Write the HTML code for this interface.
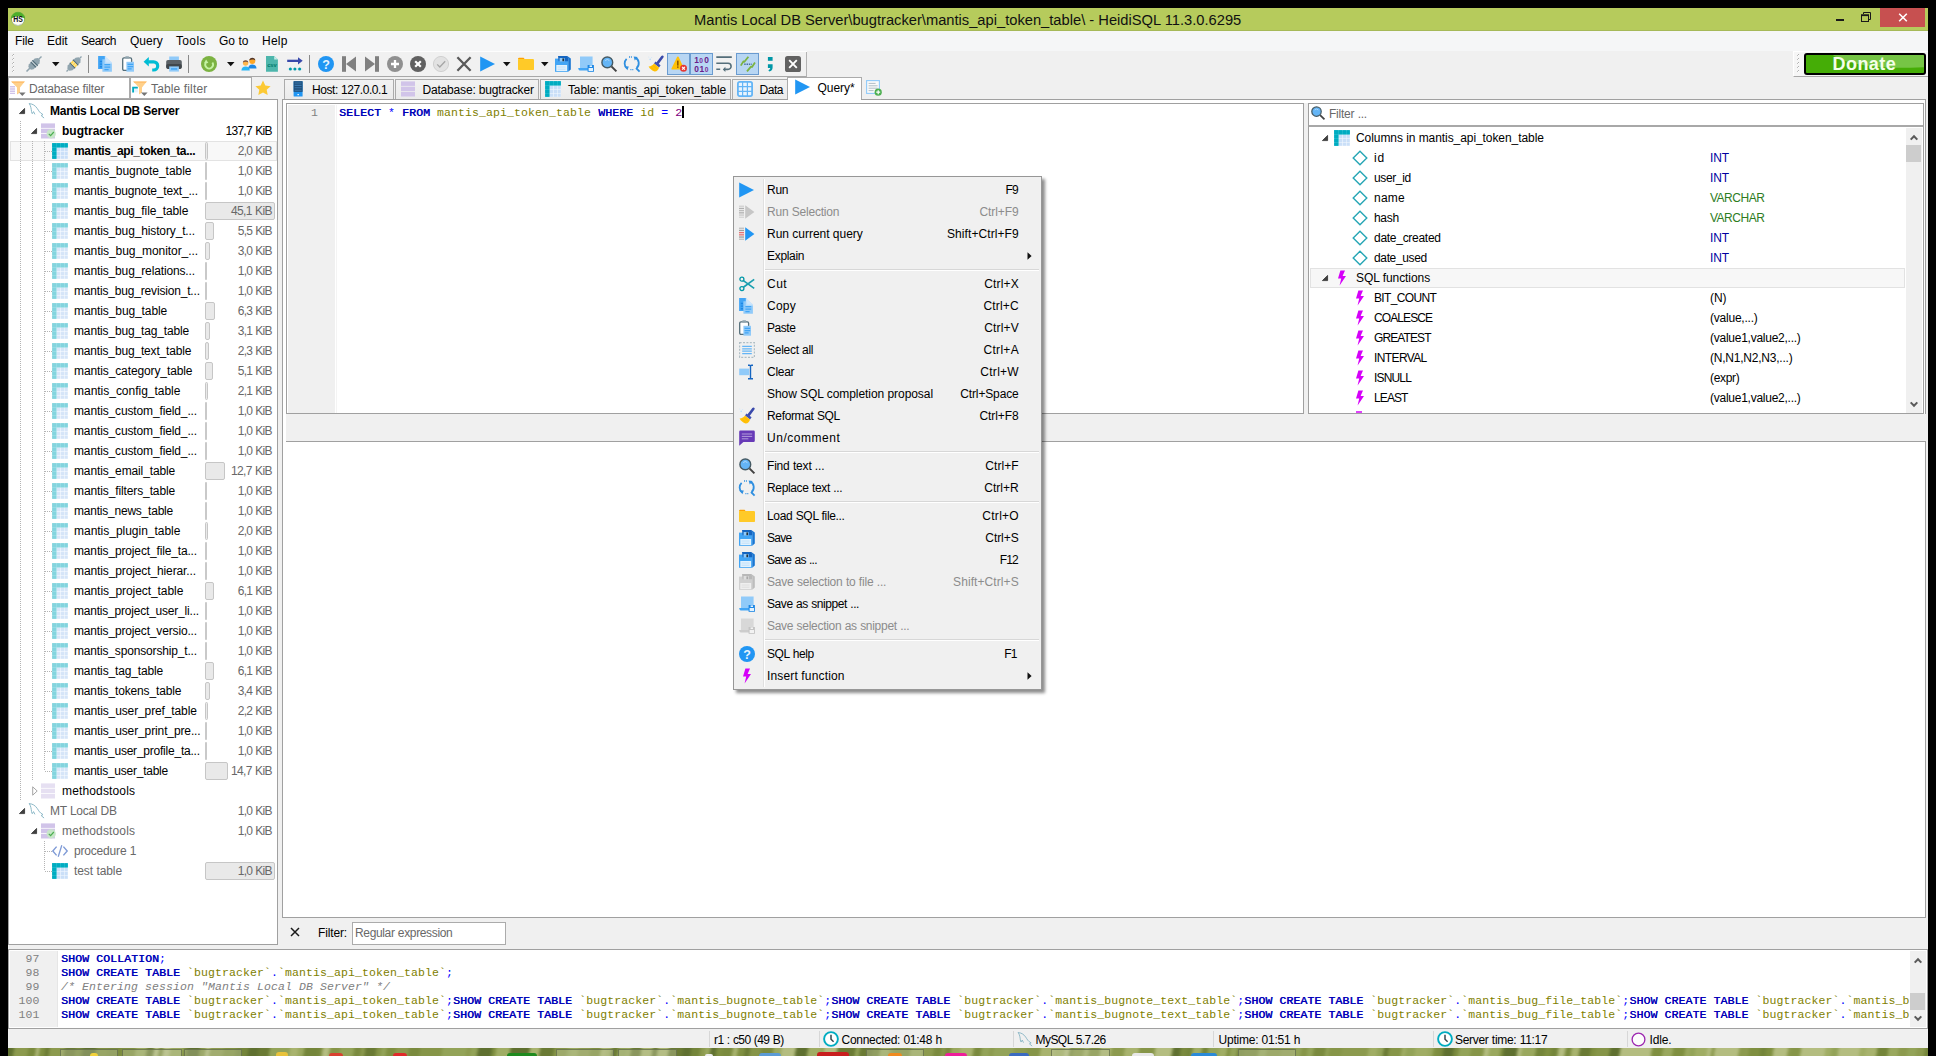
<!DOCTYPE html>
<html><head><meta charset="utf-8"><title>HeidiSQL</title>
<style>
*{box-sizing:border-box;margin:0;padding:0}
html,body{width:1936px;height:1056px;overflow:hidden;background:#000}
body{font-family:"Liberation Sans",sans-serif;font-size:12px;color:#000;position:relative;letter-spacing:-0.12px}
.a{position:absolute}
.i{position:absolute;display:block;overflow:visible}
.t{position:absolute;white-space:nowrap;line-height:16px;height:16px}
.b{font-weight:bold;letter-spacing:-0.3px}
.g{color:#686868}
.d{color:#8c8c8c}
.mono{font-family:"Liberation Mono",monospace;font-size:11.5px;letter-spacing:0.099px;white-space:pre;line-height:14px;height:14px}
.kw{color:#0000b8;text-shadow:0.45px 0 0 #0000b8}
.sy{color:#0000ff}
.id{color:#808000}
.nu{color:#800080}
.cm{color:#808080;font-style:italic}
.ln{color:#808080}
</style></head>
<body>
<div class="a" style="left:8px;top:8px;width:1920px;height:1040px;background:#f0f0f0"></div>
<div class="a" style="left:8px;top:1048px;width:1920px;height:8px;overflow:hidden;background:#86954a"><div class="a" style="left:-10px;top:-6px;width:1940px;height:20px;filter:blur(1.6px);background:linear-gradient(100deg,#9aa85e 0px,#9aa85e 8px,#5f7030 8px,#5f7030 17px,#8c9a4e 17px,#8c9a4e 20px,#8c9a4e 20px,#8c9a4e 31px,#7a8a3e 31px,#7a8a3e 39px,#b4bd80 39px,#b4bd80 42px,#7f8f40 42px,#7f8f40 48px,#6a7a34 48px,#6a7a34 52px,#8c9a4e 52px,#8c9a4e 61px,#8c9a4e 61px,#8c9a4e 67px,#6a7a34 67px,#6a7a34 78px,#7a8a3e 78px,#7a8a3e 81px,#74853a 81px,#74853a 85px,#5f7030 85px,#5f7030 98px,#7f8f40 98px,#7f8f40 110px,#7a8a3e 110px,#7a8a3e 122px,#7f8f40 122px,#7f8f40 131px,#7f8f40 131px,#7f8f40 137px,#9aa85e 137px,#9aa85e 148px,#6a7a34 148px,#6a7a34 155px,#b4bd80 155px,#b4bd80 160px,#7a8a3e 160px,#7a8a3e 164px,#b4bd80 164px,#b4bd80 171px,#9aa85e 171px,#9aa85e 184px,#7a8a3e 184px,#7a8a3e 188px,#5f7030 188px,#5f7030 200px,#869548 200px,#869548 206px,#b4bd80 206px,#b4bd80 210px,#8c9a4e 210px,#8c9a4e 224px,#7f8f40 224px,#7f8f40 236px,#74853a 236px,#74853a 248px,#5f7030 248px,#5f7030 258px,#6a7a34 258px,#6a7a34 269px,#93a358 269px,#93a358 277px,#93a358 277px,#93a358 289px,#a8b36e 289px,#a8b36e 297px,#9aa85e 297px,#9aa85e 303px,#74853a 303px,#74853a 317px,#7a8a3e 317px,#7a8a3e 321px,#b4bd80 321px,#b4bd80 328px,#869548 328px,#869548 338px,#93a358 338px,#93a358 352px,#7a8a3e 352px,#7a8a3e 359px,#8c9a4e 359px,#8c9a4e 363px,#6a7a34 363px,#6a7a34 374px,#869548 374px,#869548 379px,#93a358 379px,#93a358 384px,#7f8f40 384px,#7f8f40 393px,#8c9a4e 393px,#8c9a4e 406px,#7a8a3e 406px,#7a8a3e 417px,#869548 417px,#869548 425px,#869548 425px,#869548 439px,#93a358 439px,#93a358 451px,#93a358 451px,#93a358 463px,#8c9a4e 463px,#8c9a4e 467px,#93a358 467px,#93a358 474px,#5f7030 474px,#5f7030 488px,#7f8f40 488px,#7f8f40 492px,#a0ad64 492px,#a0ad64 506px,#5f7030 506px,#5f7030 513px,#5f7030 513px,#5f7030 525px,#a8b36e 525px,#a8b36e 535px,#6a7a34 535px,#6a7a34 549px,#869548 549px,#869548 562px,#93a358 562px,#93a358 565px,#9aa85e 565px,#9aa85e 573px,#8c9a4e 573px,#8c9a4e 585px,#7f8f40 585px,#7f8f40 595px,#a8b36e 595px,#a8b36e 601px,#a0ad64 601px,#a0ad64 606px,#6a7a34 606px,#6a7a34 612px,#93a358 612px,#93a358 621px,#9aa85e 621px,#9aa85e 625px,#6a7a34 625px,#6a7a34 635px,#a8b36e 635px,#a8b36e 646px,#6a7a34 646px,#6a7a34 651px,#a8b36e 651px,#a8b36e 662px,#6a7a34 662px,#6a7a34 676px,#5f7030 676px,#5f7030 684px,#74853a 684px,#74853a 693px,#8c9a4e 693px,#8c9a4e 698px,#9aa85e 698px,#9aa85e 703px,#5f7030 703px,#5f7030 709px,#7f8f40 709px,#7f8f40 715px,#7a8a3e 715px,#7a8a3e 725px,#a8b36e 725px,#a8b36e 730px,#7f8f40 730px,#7f8f40 737px,#6a7a34 737px,#6a7a34 742px,#869548 742px,#869548 753px,#7a8a3e 753px,#7a8a3e 765px,#9aa85e 765px,#9aa85e 773px,#b4bd80 773px,#b4bd80 787px,#5f7030 787px,#5f7030 799px,#a0ad64 799px,#a0ad64 812px,#93a358 812px,#93a358 815px,#b4bd80 815px,#b4bd80 828px,#6a7a34 828px,#6a7a34 837px,#6a7a34 837px,#6a7a34 846px,#93a358 846px,#93a358 850px,#6a7a34 850px,#6a7a34 863px,#74853a 863px,#74853a 866px,#74853a 866px,#74853a 870px,#9aa85e 870px,#9aa85e 880px,#869548 880px,#869548 884px,#7f8f40 884px,#7f8f40 896px,#7f8f40 896px,#7f8f40 900px,#9aa85e 900px,#9aa85e 912px,#8c9a4e 912px,#8c9a4e 923px,#7a8a3e 923px,#7a8a3e 931px,#8c9a4e 931px,#8c9a4e 934px,#7a8a3e 934px,#7a8a3e 940px,#9aa85e 940px,#9aa85e 949px,#a8b36e 949px,#a8b36e 962px,#7a8a3e 962px,#7a8a3e 970px,#93a358 970px,#93a358 978px,#8c9a4e 978px,#8c9a4e 982px,#93a358 982px,#93a358 992px,#93a358 992px,#93a358 1002px,#8c9a4e 1002px,#8c9a4e 1009px,#8c9a4e 1009px,#8c9a4e 1014px,#869548 1014px,#869548 1028px,#a8b36e 1028px,#a8b36e 1042px,#a0ad64 1042px,#a0ad64 1052px,#b4bd80 1052px,#b4bd80 1057px,#74853a 1057px,#74853a 1060px,#869548 1060px,#869548 1071px,#a0ad64 1071px,#a0ad64 1076px,#7f8f40 1076px,#7f8f40 1087px,#a8b36e 1087px,#a8b36e 1098px,#8c9a4e 1098px,#8c9a4e 1111px,#a8b36e 1111px,#a8b36e 1125px,#869548 1125px,#869548 1136px,#869548 1136px,#869548 1141px,#b4bd80 1141px,#b4bd80 1147px,#b4bd80 1147px,#b4bd80 1158px,#5f7030 1158px,#5f7030 1166px,#7a8a3e 1166px,#7a8a3e 1172px,#74853a 1172px,#74853a 1178px,#a0ad64 1178px,#a0ad64 1187px,#74853a 1187px,#74853a 1193px,#93a358 1193px,#93a358 1204px,#a0ad64 1204px,#a0ad64 1212px,#7f8f40 1212px,#7f8f40 1215px,#93a358 1215px,#93a358 1222px,#74853a 1222px,#74853a 1229px,#7a8a3e 1229px,#7a8a3e 1243px,#93a358 1243px,#93a358 1251px,#869548 1251px,#869548 1265px,#8c9a4e 1265px,#8c9a4e 1273px,#8c9a4e 1273px,#8c9a4e 1279px,#93a358 1279px,#93a358 1285px,#869548 1285px,#869548 1291px,#93a358 1291px,#93a358 1297px,#7a8a3e 1297px,#7a8a3e 1309px,#93a358 1309px,#93a358 1312px,#869548 1312px,#869548 1325px,#8c9a4e 1325px,#8c9a4e 1338px,#8c9a4e 1338px,#8c9a4e 1351px,#a0ad64 1351px,#a0ad64 1360px,#93a358 1360px,#93a358 1366px,#6a7a34 1366px,#6a7a34 1371px,#869548 1371px,#869548 1384px,#a0ad64 1384px,#a0ad64 1388px,#93a358 1388px,#93a358 1397px,#a0ad64 1397px,#a0ad64 1406px,#a0ad64 1406px,#a0ad64 1410px,#9aa85e 1410px,#9aa85e 1415px,#7f8f40 1415px,#7f8f40 1420px,#7a8a3e 1420px,#7a8a3e 1425px,#5f7030 1425px,#5f7030 1435px,#7a8a3e 1435px,#7a8a3e 1440px,#93a358 1440px,#93a358 1452px,#869548 1452px,#869548 1465px,#b4bd80 1465px,#b4bd80 1470px,#9aa85e 1470px,#9aa85e 1481px,#7f8f40 1481px,#7f8f40 1484px,#5f7030 1484px,#5f7030 1498px,#b4bd80 1498px,#b4bd80 1502px,#9aa85e 1502px,#9aa85e 1516px,#74853a 1516px,#74853a 1525px,#7f8f40 1525px,#7f8f40 1531px,#74853a 1531px,#74853a 1538px,#b4bd80 1538px,#b4bd80 1545px,#7a8a3e 1545px,#7a8a3e 1551px,#a8b36e 1551px,#a8b36e 1559px,#6a7a34 1559px,#6a7a34 1570px,#7f8f40 1570px,#7f8f40 1575px,#869548 1575px,#869548 1589px,#5f7030 1589px,#5f7030 1599px,#b4bd80 1599px,#b4bd80 1611px,#b4bd80 1611px,#b4bd80 1620px,#b4bd80 1620px,#b4bd80 1625px,#b4bd80 1625px,#b4bd80 1630px,#7f8f40 1630px,#7f8f40 1641px,#9aa85e 1641px,#9aa85e 1651px,#7f8f40 1651px,#7f8f40 1663px,#9aa85e 1663px,#9aa85e 1668px,#93a358 1668px,#93a358 1673px,#a0ad64 1673px,#a0ad64 1685px,#b4bd80 1685px,#b4bd80 1689px,#869548 1689px,#869548 1692px,#b4bd80 1692px,#b4bd80 1705px,#b4bd80 1705px,#b4bd80 1716px,#8c9a4e 1716px,#8c9a4e 1726px,#7f8f40 1726px,#7f8f40 1737px,#74853a 1737px,#74853a 1743px,#7f8f40 1743px,#7f8f40 1750px,#b4bd80 1750px,#b4bd80 1754px,#b4bd80 1754px,#b4bd80 1764px,#8c9a4e 1764px,#8c9a4e 1767px,#869548 1767px,#869548 1777px,#b4bd80 1777px,#b4bd80 1789px,#b4bd80 1789px,#b4bd80 1801px,#a0ad64 1801px,#a0ad64 1807px,#93a358 1807px,#93a358 1814px,#b4bd80 1814px,#b4bd80 1825px,#b4bd80 1825px,#b4bd80 1835px,#a0ad64 1835px,#a0ad64 1841px,#a8b36e 1841px,#a8b36e 1852px,#74853a 1852px,#74853a 1863px,#9aa85e 1863px,#9aa85e 1873px,#8c9a4e 1873px,#8c9a4e 1882px,#93a358 1882px,#93a358 1891px,#8c9a4e 1891px,#8c9a4e 1899px,#74853a 1899px,#74853a 1912px,#8c9a4e 1912px,#8c9a4e 1920px)"></div></div>
<div class="a" style="left:60px;top:1049px;width:58px;height:7px;background:rgba(205,210,180,0.32);border:1px solid rgba(95,105,70,0.75);border-bottom:0"></div>
<div class="a" style="left:122px;top:1049px;width:60px;height:7px;background:rgba(205,210,180,0.32);border:1px solid rgba(95,105,70,0.75);border-bottom:0"></div>
<div class="a" style="left:184px;top:1049px;width:58px;height:7px;background:rgba(205,210,180,0.32);border:1px solid rgba(95,105,70,0.75);border-bottom:0"></div>
<div class="a" style="left:556px;top:1049px;width:58px;height:7px;background:rgba(205,210,180,0.32);border:1px solid rgba(95,105,70,0.75);border-bottom:0"></div>
<div class="a" style="left:618px;top:1049px;width:59px;height:7px;background:rgba(205,210,180,0.32);border:1px solid rgba(95,105,70,0.75);border-bottom:0"></div>
<div class="a" style="left:866px;top:1049px;width:58px;height:7px;background:rgba(205,210,180,0.32);border:1px solid rgba(95,105,70,0.75);border-bottom:0"></div>
<div class="a" style="left:1051px;top:1049px;width:59px;height:7px;background:rgba(205,210,180,0.32);border:1px solid rgba(95,105,70,0.75);border-bottom:0"></div>
<div class="a" style="left:1238px;top:1049px;width:58px;height:7px;background:rgba(205,210,180,0.32);border:1px solid rgba(95,105,70,0.75);border-bottom:0"></div>
<div class="a" style="left:90px;top:1053px;width:8px;height:3px;background:#f2d23a;border-radius:3px 3px 0 0"></div>
<div class="a" style="left:276px;top:1052px;width:12px;height:4px;background:#e8c23a;border-radius:3px 3px 0 0"></div>
<div class="a" style="left:329px;top:1053px;width:14px;height:3px;background:#d9402f;border-radius:3px 3px 0 0"></div>
<div class="a" style="left:393px;top:1053px;width:14px;height:3px;background:#e02a2a;border-radius:3px 3px 0 0"></div>
<div class="a" style="left:507px;top:1053px;width:30px;height:3px;background:#1e8a1e;border-radius:3px 3px 0 0"></div>
<div class="a" style="left:705px;top:1054px;width:8px;height:2px;background:#eee;border-radius:3px 3px 0 0"></div>
<div class="a" style="left:759px;top:1053px;width:22px;height:3px;background:#5b9bd5;border-radius:3px 3px 0 0"></div>
<div class="a" style="left:817px;top:1052px;width:32px;height:4px;background:#c81e1e;border-radius:3px 3px 0 0"></div>
<div class="a" style="left:888px;top:1053px;width:14px;height:3px;background:#f08a1e;border-radius:3px 3px 0 0"></div>
<div class="a" style="left:945px;top:1053px;width:22px;height:3px;background:#ee1e9a;border-radius:3px 3px 0 0"></div>
<div class="a" style="left:1009px;top:1053px;width:20px;height:3px;background:#3a6ac0;border-radius:3px 3px 0 0"></div>
<div class="a" style="left:1132px;top:1053px;width:22px;height:3px;background:#e8e8e8;border-radius:3px 3px 0 0"></div>
<div class="a" style="left:1191px;top:1053px;width:26px;height:3px;background:#2a8ad8;border-radius:3px 3px 0 0"></div>
<div class="a" style="left:8px;top:8px;width:1920px;height:23px;background:#b6cb5c;border-bottom:1px solid #a6b958"></div>
<div class="t" style="left:694px;top:10px;font-size:14.7px;letter-spacing:0.003px;word-spacing:-0.003px;line-height:20px;height:20px;color:#111">Mantis Local DB Server\bugtracker\mantis_api_token_table\ - HeidiSQL 11.3.0.6295</div>
<div class="a" style="left:1880px;top:8px;width:45px;height:19px;background:#c75050"></div>
<svg class="i" style="left:10px;top:11px" width="16" height="16" viewBox="0 0 16 16"><circle cx="8" cy="7.9" r="6.7" fill="#fbfcf8" stroke="#8aa84e" stroke-width="0.9"/><path d="M1.3 7.2A6.8 6.8 0 0 1 14.7 7.2A11 11 0 0 0 1.3 7.2Z" fill="#4cae2a" stroke="#4cae2a" stroke-width="0.8"/><path d="M2.6 11.6A6.6 6.6 0 0 0 13.4 11.6" fill="none" stroke="#c9cfc0" stroke-width="1"/><text x="3.3" y="11" font-size="8.6" font-weight="bold" textLength="9.4" lengthAdjust="spacingAndGlyphs" font-family="Liberation Sans,sans-serif" fill="#111">HS</text></svg>
<div class="a" style="left:1836px;top:19px;width:8px;height:2px;background:#1a1a1a"></div>
<svg class="i" style="left:1860px;top:11px" width="12" height="12" viewBox="0 0 12 12"><path d="M3.5 3V1.5H10.5V8.5H9" fill="none" stroke="#1a1a1a" stroke-width="1"/><rect x="1.5" y="4" width="7" height="6.5" fill="none" stroke="#1a1a1a" stroke-width="1"/><rect x="1" y="3.5" width="8" height="1.6" fill="#1a1a1a"/></svg>
<svg class="i" style="left:1898px;top:13px" width="10" height="9" viewBox="0 0 10 9"><path d="M1.2 0.8L8.8 8.2M8.8 0.8L1.2 8.2" stroke="#fff" stroke-width="1.6" fill="none"/></svg>
<div class="a" style="left:8px;top:31px;width:1920px;height:20px;background:#f5f6f7"></div>
<div class="t" style="left:15px;top:33px;letter-spacing:-0.179px;word-spacing:0.179px;">File</div>
<div class="t" style="left:47px;top:33px;letter-spacing:-0.026px;word-spacing:0.026px;">Edit</div>
<div class="t" style="left:81px;top:33px;letter-spacing:-0.504px;word-spacing:0.504px;">Search</div>
<div class="t" style="left:130px;top:33px;letter-spacing:0.006px;word-spacing:-0.006px;">Query</div>
<div class="t" style="left:176px;top:33px;letter-spacing:0.347px;word-spacing:-0.347px;">Tools</div>
<div class="t" style="left:219px;top:33px;letter-spacing:0.017px;word-spacing:-0.017px;">Go to</div>
<div class="t" style="left:262px;top:33px;letter-spacing:0.24px;word-spacing:-0.24px;">Help</div>
<div class="a" style="left:8px;top:51px;width:799px;height:1px;background:#fdfdfd"></div>
<div class="a" style="left:8px;top:52px;width:799px;height:25px;background:#f1f1f1;border-right:1px solid #b4b4b4;border-bottom:1px solid #a8a8a8"></div>
<div class="a" style="left:13px;top:54px;width:1px;height:1px;background:#b0b0b0"></div><div class="a" style="left:12px;top:55px;width:1px;height:1px;background:#bcbcbc"></div><div class="a" style="left:13px;top:55px;width:1px;height:1px;background:#fff"></div><div class="a" style="left:13px;top:58px;width:1px;height:1px;background:#b0b0b0"></div><div class="a" style="left:12px;top:59px;width:1px;height:1px;background:#bcbcbc"></div><div class="a" style="left:13px;top:59px;width:1px;height:1px;background:#fff"></div><div class="a" style="left:13px;top:62px;width:1px;height:1px;background:#b0b0b0"></div><div class="a" style="left:12px;top:63px;width:1px;height:1px;background:#bcbcbc"></div><div class="a" style="left:13px;top:63px;width:1px;height:1px;background:#fff"></div><div class="a" style="left:13px;top:66px;width:1px;height:1px;background:#b0b0b0"></div><div class="a" style="left:12px;top:67px;width:1px;height:1px;background:#bcbcbc"></div><div class="a" style="left:13px;top:67px;width:1px;height:1px;background:#fff"></div><div class="a" style="left:13px;top:70px;width:1px;height:1px;background:#b0b0b0"></div><div class="a" style="left:12px;top:71px;width:1px;height:1px;background:#bcbcbc"></div><div class="a" style="left:13px;top:71px;width:1px;height:1px;background:#fff"></div>
<svg class="i" style="left:26px;top:56px" width="16" height="16" viewBox="0 0 16 16"><g transform="rotate(45 8 8)"><rect x="7.3" y="-2.6" width="1.4" height="4" fill="#90a4ae"/><rect x="7.2" y="13.6" width="1.6" height="5" fill="#90a4ae"/><path d="M6.6 1H9.4L11.4 3.6V12L9.8 14.2H6.2L4.6 12V3.6Z" fill="#90a4ae"/><rect x="4.2" y="6" width="7.6" height="1.3" fill="#546e7a"/><rect x="4.2" y="8.2" width="7.6" height="1.3" fill="#546e7a"/><rect x="4.2" y="7.3" width="7.6" height="0.9" fill="#cfd8dc"/></g></svg>
<svg class="i" style="left:51.75px;top:62px" width="7.5" height="4.2" viewBox="0 0 7.5 4.2"><path d="M0 0H7.5L3.75 4.2Z" fill="#111"/></svg>
<svg class="i" style="left:66px;top:56px" width="16" height="16" viewBox="0 0 16 16"><g transform="rotate(45 8 8)"><rect x="7.3" y="-2.6" width="1.4" height="3" fill="#90a4ae"/><rect x="7.3" y="15.6" width="1.4" height="3" fill="#90a4ae"/><path d="M6.6 0H9.4L11.4 2.4V5.4H4.6V2.4Z" fill="#90a4ae"/><path d="M4.6 10.6H11.4V13.6L9.4 16H6.6L4.6 13.6Z" fill="#90a4ae"/><rect x="4.2" y="5.2" width="7.6" height="1.3" fill="#546e7a"/><rect x="4.2" y="9.5" width="7.6" height="1.3" fill="#546e7a"/><rect x="4.6" y="6.5" width="6.8" height="3" fill="#ffd54f"/><rect x="6.4" y="6.5" width="1" height="3" fill="#ffe9a0"/><rect x="8.8" y="6.5" width="1" height="3" fill="#ffe9a0"/></g></svg>
<div class="a" style="left:88px;top:55px;width:1px;height:18px;background:#8a8a8a"></div>
<svg class="i" style="left:98px;top:56px" width="16" height="16" viewBox="0 0 16 16"><path d="M0.1 0H6.8L8 1.5V12.9H0.1Z" fill="#42a5f5"/><path d="M1.8 4.8h2.2v1.4h-2.2zM1.8 7.4h2.2v1.4h-2.2zM1.8 10h2.2v1.4h-2.2z" fill="#1e88e5"/><path d="M4.4 3.2H8.6L13.9 7.6V15.8H4.4Z" fill="#90caf9"/><path d="M6.8 0.3L13.9 6.4V7.8H6.8Z" fill="#bbdefb"/><path d="M6.8 0.3L13.9 6.4H8.4Z" fill="#cfe6fb"/><path d="M6.4 8.6h5.8M6.4 11.2h5.8M6.4 13.6h4.2" stroke="#42a5f5" stroke-width="1.2"/></svg>
<svg class="i" style="left:122px;top:56px" width="16" height="16" viewBox="0 0 16 16"><rect x="0.7" y="1.9" width="8.9" height="12.4" rx="1.3" fill="#fff" stroke="#546e7a" stroke-width="1.3"/><rect x="3.2" y="0.3" width="4" height="2.3" rx="0.8" fill="#90a4ae"/><rect x="4.4" y="5.8" width="7.6" height="9.9" fill="#90caf9"/><path d="M5.6 8.4h5.6M5.6 10.6h5.6M5.6 12.8h4" stroke="#42a5f5" stroke-width="1.2"/></svg>
<svg class="i" style="left:143px;top:56px" width="16" height="16" viewBox="0 0 16 16"><path d="M0.6 5.8L5.8 1V10.6Z" fill="#00bcd4"/><path d="M5.2 5.8H10.6A4.1 4.1 0 0 1 10.6 14H9.2" fill="none" stroke="#00bcd4" stroke-width="3.2"/></svg>
<svg class="i" style="left:166px;top:56px" width="16" height="16" viewBox="0 0 16 16"><rect x="3.2" y="0.5" width="9.7" height="4" fill="#90caf9"/><rect x="0.2" y="3.9" width="15.6" height="9" rx="1.8" fill="#5b6166"/><rect x="0.2" y="8" width="15.6" height="4.9" rx="1.8" fill="#41474b"/><rect x="3.2" y="10.4" width="9.7" height="5.2" fill="#90caf9"/><rect x="5" y="12.2" width="6.2" height="1.5" fill="#42a5f5"/></svg>
<div class="a" style="left:188px;top:55px;width:1px;height:18px;background:#8a8a8a"></div>
<svg class="i" style="left:201px;top:56px" width="16" height="16" viewBox="0 0 16 16"><circle cx="8" cy="8" r="8" fill="#7cb342"/><path d="M4.9 6.4A3.9 3.9 0 1 0 11.4 6.4" fill="none" stroke="#c5f3a4" stroke-width="1.8"/><path d="M3 7.2L5.1 3.6L7.4 7Z" fill="#c5f3a4"/></svg>
<svg class="i" style="left:226.75px;top:62px" width="7.5" height="4.2" viewBox="0 0 7.5 4.2"><path d="M0 0H7.5L3.75 4.2Z" fill="#111"/></svg>
<svg class="i" style="left:241px;top:56px" width="16" height="16" viewBox="0 0 16 16"><path d="M0.4 14.6C0.6 12 2 10.6 4.6 10.6S8.6 12 8.8 14.6Z" fill="#29b6f6"/><circle cx="4.6" cy="7.1" r="2.7" fill="#ffb74d"/><path d="M1.9 6.6C1.9 3.4 7.3 3.4 7.3 6.6C6 5.6 3.4 5.6 1.9 6.6Z" fill="#795548"/><path d="M7.2 12.4C7.4 10 8.8 8.6 11.3 8.6S15.3 10 15.5 12.4Z" fill="#1e88e5"/><circle cx="11.3" cy="4.9" r="3" fill="#ffa726"/><path d="M8.3 4.4C8.3 0.8 14.3 0.8 14.3 4.4C13 3.2 9.8 3.2 8.3 4.4Z" fill="#4e342e"/></svg>
<svg class="i" style="left:264px;top:56px" width="16" height="16" viewBox="0 0 16 16"><path d="M2 0H10.2L13.9 3.6V15.8H2Z" fill="#4db6ac"/><path d="M10.2 0V3.6H13.9Z" fill="#c8ebe7"/><text x="7.9" y="11.4" font-size="5.8" font-weight="bold" text-anchor="middle" font-family="Liberation Sans,sans-serif" fill="#00796b">csv</text></svg>
<svg class="i" style="left:287px;top:56px" width="16" height="16" viewBox="0 0 16 16"><rect x="0.2" y="3.7" width="11.4" height="2.3" fill="#3949ab"/><path d="M11 1.2L15.7 4.85L11 8.5Z" fill="#3949ab"/><path d="M0.6 13.1H15.4" stroke="#b2ebf2" stroke-width="0.8"/><circle cx="3.4" cy="13.1" r="1.5" fill="#0097a7"/><circle cx="7.9" cy="13.1" r="1.5" fill="#0097a7"/><circle cx="12.6" cy="13.1" r="1.5" fill="#0097a7"/></svg>
<div class="a" style="left:309px;top:55px;width:1px;height:18px;background:#8a8a8a"></div>
<svg class="i" style="left:318px;top:56px" width="16" height="16" viewBox="0 0 16 16"><circle cx="8" cy="8" r="8" fill="#2196f3"/><text x="8" y="12.6" font-size="12.5" font-weight="bold" text-anchor="middle" font-family="Liberation Sans,sans-serif" fill="#e8f4fe">?</text></svg>
<svg class="i" style="left:341px;top:56px" width="16" height="16" viewBox="0 0 16 16"><rect x="1" y="0.2" width="4" height="15.6" fill="#808080"/><path d="M15 0.4V15.6L5 8Z" fill="#808080"/></svg>
<svg class="i" style="left:364px;top:56px" width="16" height="16" viewBox="0 0 16 16"><rect x="11" y="0.2" width="4" height="15.6" fill="#808080"/><path d="M1 0.4V15.6L11 8Z" fill="#808080"/></svg>
<svg class="i" style="left:387px;top:56px" width="16" height="16" viewBox="0 0 16 16"><circle cx="8" cy="8" r="8" fill="#909090"/><path d="M8 4V12M4 8H12" stroke="#fff" stroke-width="2.3"/></svg>
<svg class="i" style="left:410px;top:56px" width="16" height="16" viewBox="0 0 16 16"><circle cx="8" cy="8" r="8" fill="#616161"/><path d="M5.2 5.2L10.8 10.8M10.8 5.2L5.2 10.8" stroke="#fff" stroke-width="2.2"/></svg>
<svg class="i" style="left:433px;top:56px" width="16" height="16" viewBox="0 0 16 16"><circle cx="8" cy="8" r="7.6" fill="#e2e2e2" stroke="#c4c4c4" stroke-width="0.7"/><path d="M4.2 8.4L6.8 11L12.2 5.2" stroke="#a6a6a6" stroke-width="1.3" fill="none"/></svg>
<svg class="i" style="left:456px;top:56px" width="16" height="16" viewBox="0 0 16 16"><path d="M1.4 1.2L14.6 14.8M14.6 1.2L1.4 14.8" stroke="#5a5a5a" stroke-width="2.3" fill="none"/></svg>
<svg class="i" style="left:480px;top:56px" width="16" height="16" viewBox="0 0 16 16"><path d="M0.2 0.5L15 8L0.2 15.6Z" fill="#2196f3"/></svg>
<svg class="i" style="left:502.75px;top:62px" width="7.5" height="4.2" viewBox="0 0 7.5 4.2"><path d="M0 0H7.5L3.75 4.2Z" fill="#111"/></svg>
<svg class="i" style="left:518px;top:56px" width="16" height="16" viewBox="0 0 16 16"><path d="M0 2.9A1.2 1.2 0 0 1 1.2 1.7H5.6L7 3.4H0Z" fill="#ffa000"/><rect x="0" y="2.9" width="16" height="11.2" rx="1.2" fill="#ffca28"/></svg>
<svg class="i" style="left:540.75px;top:62px" width="7.5" height="4.2" viewBox="0 0 7.5 4.2"><path d="M0 0H7.5L3.75 4.2Z" fill="#111"/></svg>
<svg class="i" style="left:555px;top:56px" width="16" height="16" viewBox="0 0 16 16"><path d="M12.6 0.2L15.8 2.6V13.4L13.2 15.8V2.6Z" fill="#1976d2"/><path d="M0 2.6H13.2V15.8H0Z" fill="#42a5f5"/><path d="M3 0H12.6L13.2 2.6V5.2H3.6Z" fill="#1565c0"/><rect x="4.6" y="2" width="5" height="3.6" fill="#90caf9"/><rect x="7.4" y="2.4" width="1.6" height="2.8" fill="#263238"/><rect x="1.3" y="9" width="10.8" height="6" fill="#e3f2fd"/><path d="M2.6 11h8M2.6 13.2h8" stroke="#bbdefb" stroke-width="0.9"/></svg>
<svg class="i" style="left:578px;top:56px" width="16" height="16" viewBox="0 0 16 16"><rect x="2" y="0.5" width="12.6" height="11.6" fill="#90caf9"/><path d="M0.2 12H12C12 13.8 11 14.6 9.6 14.6H2.6C1.2 14.6 0.2 13.6 0.2 12Z" fill="#42a5f5"/><rect x="9.6" y="9" width="6.3" height="6.8" fill="#1e88e5"/><rect x="10.6" y="12" width="4.4" height="3" fill="#e3f2fd"/><rect x="11.6" y="9.4" width="2.4" height="1.6" fill="#e3f2fd"/></svg>
<svg class="i" style="left:601px;top:56px" width="16" height="16" viewBox="0 0 16 16"><path d="M10.4 10.4L15.4 15.4" stroke="#424242" stroke-width="2"/><circle cx="6.3" cy="6.4" r="5.4" fill="#64b5f6" stroke="#455a64" stroke-width="1.4"/><path d="M4.2 4.6A2.8 2.8 0 0 1 8.4 4.6" stroke="#bbdefb" stroke-width="0.9" fill="none"/></svg>
<svg class="i" style="left:624px;top:56px" width="16" height="16" viewBox="0 0 16 16"><path d="M2.6 2.8A6.4 6.4 0 0 0 3 12.4" fill="none" stroke="#2f8fe0" stroke-width="1.8"/><path d="M11.4 1.6A6.4 6.4 0 0 1 12.6 12" fill="none" stroke="#2f8fe0" stroke-width="1.8"/><path d="M0.6 10.2L4.8 10.6L3.4 14.2Z" fill="#2f8fe0"/><path d="M9.6 0.4L13.6 1L10.8 4.4Z" fill="#2f8fe0"/><path d="M5 1h3.4M6.4 13.6h3" stroke="#2f8fe0" stroke-width="1.3" stroke-dasharray="1 0.9"/><path d="M12 12L15.6 15.6" stroke="#2f8fe0" stroke-width="1.8"/></svg>
<svg class="i" style="left:648px;top:56px" width="16" height="16" viewBox="0 0 16 16"><path d="M14.4 0.8L9.4 7.4" stroke="#3949ab" stroke-width="2.6" stroke-linecap="round"/><path d="M7.4 5.4L12.6 9.2L11 11.4L6 7.6Z" fill="#3f51b5"/><path d="M6 7.6L11 11.4C10.6 13.6 9 15.2 6.6 15.6C4 14.8 1.8 13 0.6 10.6C3 10.4 4.8 9.4 6 7.6Z" fill="#ffc107"/><path d="M3 11.4L6.4 14M5 9.6L8.6 12.6" stroke="#ffb300" stroke-width="0.7"/><circle cx="2.2" cy="3.4" r="0.8" fill="#bbdefb"/><circle cx="0.8" cy="1" r="0.5" fill="#cfe6fb"/><circle cx="3.6" cy="1.6" r="0.5" fill="#cfe6fb"/></svg>
<div class="a" style="left:667px;top:53px;width:23px;height:22px;background:#b8d6f3;border:1px solid #6a9bd0"></div><svg class="i" style="left:671px;top:56px" width="16" height="16" viewBox="0 0 16 16"><path d="M6.2 0.8A0.8 0.8 0 0 1 7.6 0.8L12.9 12.4A0.8 0.8 0 0 1 12.2 13.6H1.2A0.8 0.8 0 0 1 0.5 12.4Z" fill="#ffc107"/><rect x="6" y="4.6" width="1.6" height="5" fill="#8d5a00"/><rect x="6" y="10.4" width="1.6" height="1.4" fill="#8d5a00"/><circle cx="12.5" cy="12.2" r="3.5" fill="#e53935"/><path d="M11.1 10.8L13.9 13.6M13.9 10.8L11.1 13.6" stroke="#fff" stroke-width="1.2"/></svg>
<div class="a" style="left:690px;top:53px;width:23px;height:22px;background:#b8d6f3;border:1px solid #6a9bd0"></div><svg class="i" style="left:694px;top:56px" width="16" height="16" viewBox="0 0 16 16"><text x="0.2" y="6.6" font-size="8.4" font-weight="bold" font-family="Liberation Sans,sans-serif" fill="#6a1b8a">1</text><text x="5.2" y="6.6" font-size="6.6" font-weight="bold" font-family="Liberation Sans,sans-serif" fill="#7b2a9a">0</text><text x="10.2" y="6.6" font-size="8.4" font-weight="bold" font-family="Liberation Sans,sans-serif" fill="#6a1b8a">0</text><text x="0.2" y="15.8" font-size="8.4" font-weight="bold" font-family="Liberation Sans,sans-serif" fill="#6a1b8a">0</text><text x="5.6" y="15.8" font-size="8.4" font-weight="bold" font-family="Liberation Sans,sans-serif" fill="#6a1b8a">1</text><text x="10.8" y="15.8" font-size="6.6" font-weight="bold" font-family="Liberation Sans,sans-serif" fill="#7b2a9a">0</text></svg>
<svg class="i" style="left:716px;top:56px" width="16" height="16" viewBox="0 0 16 16"><path d="M0.3 1.1H15.8M0.3 7.2H12A3.1 3.1 0 0 1 12 13.4H8.4M0.3 13.3H4.2" stroke="#546e7a" stroke-width="1.6" fill="none"/><path d="M9.4 10.8L6.8 13.4L9.4 16Z" fill="#546e7a"/></svg>
<div class="a" style="left:736px;top:53px;width:23px;height:22px;background:#b8d6f3;border:1px solid #6a9bd0"></div><svg class="i" style="left:740px;top:56px" width="16" height="16" viewBox="0 0 16 16"><path d="M0.8 9.6L3.4 5.4L4.4 5.8L8.4 0.8" stroke="#7cb342" stroke-width="1.8" fill="none" stroke-linejoin="round"/><path d="M7 15.4L11 10.6L12 11L15 6.6" stroke="#7cb342" stroke-width="1.8" fill="none" stroke-linejoin="round"/><path d="M4.2 8.3H11.8" stroke="#4a6fa5" stroke-width="1.5" stroke-dasharray="1.5 0.8"/></svg>
<svg class="i" style="left:762px;top:56px" width="16" height="16" viewBox="0 0 16 16"><rect x="5.9" y="1" width="4.7" height="3.8" fill="#0097a7"/><path d="M5.9 8.2H10.6V11.4C10.6 13.6 9.4 15 7.2 15.6L6.4 14.2C7.6 13.8 8.2 13 8.2 12H5.9Z" fill="#0097a7"/></svg>
<svg class="i" style="left:785px;top:56px" width="16" height="16" viewBox="0 0 16 16"><rect x="0" y="0" width="16" height="16" rx="2.6" fill="#616161"/><path d="M4.2 4.2L11.8 11.8M11.8 4.2L4.2 11.8" stroke="#fff" stroke-width="1.9"/></svg>
<div class="a" style="left:1793px;top:51px;width:135px;height:26px;background:#f6f6f6;border-left:1px solid #fff;border-top:1px solid #fff;border-bottom:1px solid #a8a8a8"></div>
<div class="a" style="left:1798px;top:54px;width:1px;height:1px;background:#b0b0b0"></div><div class="a" style="left:1797px;top:55px;width:1px;height:1px;background:#bcbcbc"></div><div class="a" style="left:1798px;top:55px;width:1px;height:1px;background:#fff"></div><div class="a" style="left:1798px;top:58px;width:1px;height:1px;background:#b0b0b0"></div><div class="a" style="left:1797px;top:59px;width:1px;height:1px;background:#bcbcbc"></div><div class="a" style="left:1798px;top:59px;width:1px;height:1px;background:#fff"></div><div class="a" style="left:1798px;top:62px;width:1px;height:1px;background:#b0b0b0"></div><div class="a" style="left:1797px;top:63px;width:1px;height:1px;background:#bcbcbc"></div><div class="a" style="left:1798px;top:63px;width:1px;height:1px;background:#fff"></div><div class="a" style="left:1798px;top:66px;width:1px;height:1px;background:#b0b0b0"></div><div class="a" style="left:1797px;top:67px;width:1px;height:1px;background:#bcbcbc"></div><div class="a" style="left:1798px;top:67px;width:1px;height:1px;background:#fff"></div><div class="a" style="left:1798px;top:70px;width:1px;height:1px;background:#b0b0b0"></div><div class="a" style="left:1797px;top:71px;width:1px;height:1px;background:#bcbcbc"></div><div class="a" style="left:1798px;top:71px;width:1px;height:1px;background:#fff"></div>
<div class="a" style="left:1804px;top:53px;width:122px;height:22px;background:#000;border-radius:3px"></div>
<div class="a" style="left:1806px;top:55px;width:118px;height:18px;border-radius:1px;overflow:hidden;background:#45ad06"><div class="a" style="left:22px;top:-40px;width:200px;height:52px;border-radius:50%;background:#76c545;transform:rotate(-4deg)"></div></div>
<div class="t" style="left:1832.5px;top:53px;font-weight:bold;font-size:18px;letter-spacing:0.459px;word-spacing:-0.459px;color:#f4ffe8;line-height:22px;height:22px">Donate</div>
<div class="a" style="left:8px;top:77px;width:122px;height:22px;background:#fff;border:1px solid #ababab"></div>
<svg class="i" style="left:10px;top:81px" width="16" height="16" viewBox="0 0 16 16"><path d="M0 5.8h5M0 8h5M0 10.2h5M0 12.4h5" stroke="#d1c4e9" stroke-width="1.4"/><path d="M1.2 0.6H14.8L10 6.4V11.4L7 13.6V6.4Z" fill="#ffd08a"/><path d="M1.2 0.6H14.8L13.6 2H2.4Z" fill="#ffc070"/><path d="M9 11.6H15.6L12.3 15Z" fill="#757575"/></svg>
<div class="t g" style="left:29px;top:81px;letter-spacing:-0.144px;word-spacing:0.144px;">Database filter</div>
<div class="a" style="left:130px;top:77px;width:122px;height:22px;background:#fff;border:1px solid #ababab"></div>
<svg class="i" style="left:132px;top:81px" width="16" height="16" viewBox="0 0 16 16"><rect x="0.2" y="5.8" width="5.6" height="5.6" fill="#e3f2fd"/><path d="M0.2 5.8H5.8V7.6H2V11.4H0.2Z" fill="#00acc1"/><path d="M1.2 0.6H14.8L10 6.4V11.4L7 13.6V6.4Z" fill="#ffd08a"/><path d="M1.2 0.6H14.8L13.6 2H2.4Z" fill="#ffc070"/><path d="M9 11.6H15.6L12.3 15Z" fill="#757575"/></svg>
<div class="t g" style="left:151px;top:81px;letter-spacing:0.151px;word-spacing:-0.151px;">Table filter</div>
<svg class="i" style="left:255px;top:80px" width="16" height="16" viewBox="0 0 16 16"><path d="M8 0.6L10.3 5.4L15.6 6.2L11.7 9.8L12.7 15.1L8 12.5L3.3 15.1L4.3 9.8L0.4 6.2L5.7 5.4Z" fill="#fcc934"/></svg>
<div class="a" style="left:8px;top:99px;width:270px;height:846px;background:#fff;border:1px solid #a0a0a0"></div>
<div class="a" style="left:10px;top:141px;width:267px;height:20px;background:#f8f8f8;border:1px solid #e3e3e3"></div>
<div class="a" style="left:20px;top:121px;width:1px;height:680px;background:repeating-linear-gradient(180deg,#b4b4b4 0 1px,transparent 1px 2px)"></div>
<div class="a" style="left:32px;top:141px;width:1px;height:640px;background:repeating-linear-gradient(180deg,#b4b4b4 0 1px,transparent 1px 2px)"></div>
<div class="a" style="left:44px;top:141px;width:1px;height:630px;background:repeating-linear-gradient(180deg,#b4b4b4 0 1px,transparent 1px 2px)"></div>
<svg class="i" style="left:19px;top:108px" width="6" height="6" viewBox="0 0 6 6"><path d="M5.6 0.4V5.6H0.4Z" fill="#404040" stroke="#262626" stroke-width="0.7"/></svg>
<svg class="i" style="left:29px;top:103px" width="16" height="16" viewBox="0 0 16 16"><path d="M0.4 0.7C3.2 0.6 6.2 2.4 8.2 5.4C9.8 7.8 10.8 10 14 11.6L12.2 12.6L14.8 14.8M0.4 0.7C1.8 3 2.3 6 2.5 8.4C2.6 9.6 2.9 10.2 3.3 10.7L4.5 8.6L5.7 11" fill="none" stroke="#86b4c4" stroke-width="0.95" stroke-linejoin="round" stroke-linecap="round"/></svg>
<div class="t" style="left:50px;top:103px;font-weight:bold;letter-spacing:-0.258px;word-spacing:0.258px;">Mantis Local DB Server</div>
<svg class="i" style="left:31px;top:128px" width="6" height="6" viewBox="0 0 6 6"><path d="M5.6 0.4V5.6H0.4Z" fill="#404040" stroke="#262626" stroke-width="0.7"/></svg>
<svg class="i" style="left:40px;top:123px" width="16" height="16" viewBox="0 0 16 16"><rect x="1" y="0.4" width="14" height="4.5" fill="#d1c4e9"/><rect x="1" y="5.7" width="14" height="4.5" fill="#d1c4e9"/><rect x="1" y="11" width="14" height="4.5" fill="#d1c4e9"/><circle cx="11.2" cy="10.8" r="4.6" fill="#c8e6c9"/><path d="M8.8 10.8L10.6 12.6L13.8 9" stroke="#4caf50" stroke-width="1.2" fill="none"/></svg>
<div class="t" style="left:62px;top:123px;font-weight:bold;letter-spacing:-0.002px;word-spacing:0.002px;">bugtracker</div>
<div class="t" style="right:1664.33px;top:123px;letter-spacing:-0.734px;word-spacing:0.734px;">137,7 KiB</div>
<div class="a" style="left:45px;top:151px;width:7px;height:1px;background:repeating-linear-gradient(90deg,#b4b4b4 0 1px,transparent 1px 2px)"></div>
<svg class="i" style="left:52px;top:143px" width="16" height="16" viewBox="0 0 16 16"><rect x="0.2" y="0.2" width="15.6" height="15.6" fill="#f6faff"/><rect x="0.2" y="0.2" width="15.6" height="4.4" fill="#33bfd0"/><rect x="0.2" y="0.2" width="4.4" height="15.6" fill="#33bfd0"/><rect x="0.2" y="0.2" width="4.2" height="4.2" fill="#00acc1"/><rect x="4.9" y="0.2" width="3.3" height="4.2" fill="#00acc1"/><rect x="8.7" y="0.2" width="3.3" height="4.2" fill="#00acc1"/><rect x="12.5" y="0.2" width="3.3" height="4.2" fill="#00acc1"/><rect x="0.2" y="4.9" width="4.2" height="3.3" fill="#00acc1"/><rect x="4.9" y="4.9" width="3.3" height="3.3" fill="#cadff8"/><rect x="8.7" y="4.9" width="3.3" height="3.3" fill="#cadff8"/><rect x="12.5" y="4.9" width="3.3" height="3.3" fill="#cadff8"/><rect x="0.2" y="8.7" width="4.2" height="3.3" fill="#00acc1"/><rect x="4.9" y="8.7" width="3.3" height="3.3" fill="#cadff8"/><rect x="8.7" y="8.7" width="3.3" height="3.3" fill="#cadff8"/><rect x="12.5" y="8.7" width="3.3" height="3.3" fill="#cadff8"/><rect x="0.2" y="12.5" width="4.2" height="3.3" fill="#00acc1"/><rect x="4.9" y="12.5" width="3.3" height="3.3" fill="#cadff8"/><rect x="8.7" y="12.5" width="3.3" height="3.3" fill="#cadff8"/><rect x="12.5" y="12.5" width="3.3" height="3.3" fill="#cadff8"/></svg>
<div class="t" style="left:74px;top:143px;font-weight:bold;letter-spacing:-0.343px;word-spacing:0.343px;">mantis_api_token_ta...</div>
<div class="a" style="left:205px;top:142px;width:3.1px;height:18px;background:#e9e9e9;border:1px solid #c6c6c6;border-radius:2px"></div>
<div class="t g" style="right:1664.42px;top:143px;letter-spacing:-0.818px;word-spacing:0.818px;">2,0 KiB</div>
<div class="a" style="left:45px;top:171px;width:7px;height:1px;background:repeating-linear-gradient(90deg,#b4b4b4 0 1px,transparent 1px 2px)"></div>
<svg class="i" style="left:52px;top:163px" width="16" height="16" viewBox="0 0 16 16"><rect x="0.2" y="0.2" width="15.6" height="15.6" fill="#fbfdff"/><rect x="0.2" y="0.2" width="15.6" height="4.4" fill="#a6e2ea"/><rect x="0.2" y="0.2" width="4.4" height="15.6" fill="#a6e2ea"/><rect x="0.2" y="0.2" width="4.2" height="4.2" fill="#84d4de"/><rect x="4.9" y="0.2" width="3.3" height="4.2" fill="#84d4de"/><rect x="8.7" y="0.2" width="3.3" height="4.2" fill="#84d4de"/><rect x="12.5" y="0.2" width="3.3" height="4.2" fill="#84d4de"/><rect x="0.2" y="4.9" width="4.2" height="3.3" fill="#84d4de"/><rect x="4.9" y="4.9" width="3.3" height="3.3" fill="#d6e5f8"/><rect x="8.7" y="4.9" width="3.3" height="3.3" fill="#d6e5f8"/><rect x="12.5" y="4.9" width="3.3" height="3.3" fill="#d6e5f8"/><rect x="0.2" y="8.7" width="4.2" height="3.3" fill="#84d4de"/><rect x="4.9" y="8.7" width="3.3" height="3.3" fill="#d6e5f8"/><rect x="8.7" y="8.7" width="3.3" height="3.3" fill="#d6e5f8"/><rect x="12.5" y="8.7" width="3.3" height="3.3" fill="#d6e5f8"/><rect x="0.2" y="12.5" width="4.2" height="3.3" fill="#84d4de"/><rect x="4.9" y="12.5" width="3.3" height="3.3" fill="#d6e5f8"/><rect x="8.7" y="12.5" width="3.3" height="3.3" fill="#d6e5f8"/><rect x="12.5" y="12.5" width="3.3" height="3.3" fill="#d6e5f8"/></svg>
<div class="t" style="left:74px;top:163px;letter-spacing:-0.031px;word-spacing:0.031px;">mantis_bugnote_table</div>
<div class="a" style="left:205px;top:162px;width:1.5px;height:18px;background:#c9c9c9;border-radius:1px"></div>
<div class="t g" style="right:1664.42px;top:163px;letter-spacing:-0.818px;word-spacing:0.818px;">1,0 KiB</div>
<div class="a" style="left:45px;top:191px;width:7px;height:1px;background:repeating-linear-gradient(90deg,#b4b4b4 0 1px,transparent 1px 2px)"></div>
<svg class="i" style="left:52px;top:183px" width="16" height="16" viewBox="0 0 16 16"><rect x="0.2" y="0.2" width="15.6" height="15.6" fill="#fbfdff"/><rect x="0.2" y="0.2" width="15.6" height="4.4" fill="#a6e2ea"/><rect x="0.2" y="0.2" width="4.4" height="15.6" fill="#a6e2ea"/><rect x="0.2" y="0.2" width="4.2" height="4.2" fill="#84d4de"/><rect x="4.9" y="0.2" width="3.3" height="4.2" fill="#84d4de"/><rect x="8.7" y="0.2" width="3.3" height="4.2" fill="#84d4de"/><rect x="12.5" y="0.2" width="3.3" height="4.2" fill="#84d4de"/><rect x="0.2" y="4.9" width="4.2" height="3.3" fill="#84d4de"/><rect x="4.9" y="4.9" width="3.3" height="3.3" fill="#d6e5f8"/><rect x="8.7" y="4.9" width="3.3" height="3.3" fill="#d6e5f8"/><rect x="12.5" y="4.9" width="3.3" height="3.3" fill="#d6e5f8"/><rect x="0.2" y="8.7" width="4.2" height="3.3" fill="#84d4de"/><rect x="4.9" y="8.7" width="3.3" height="3.3" fill="#d6e5f8"/><rect x="8.7" y="8.7" width="3.3" height="3.3" fill="#d6e5f8"/><rect x="12.5" y="8.7" width="3.3" height="3.3" fill="#d6e5f8"/><rect x="0.2" y="12.5" width="4.2" height="3.3" fill="#84d4de"/><rect x="4.9" y="12.5" width="3.3" height="3.3" fill="#d6e5f8"/><rect x="8.7" y="12.5" width="3.3" height="3.3" fill="#d6e5f8"/><rect x="12.5" y="12.5" width="3.3" height="3.3" fill="#d6e5f8"/></svg>
<div class="t" style="left:74px;top:183px;letter-spacing:-0.181px;word-spacing:0.181px;">mantis_bugnote_text_...</div>
<div class="a" style="left:205px;top:182px;width:1.5px;height:18px;background:#c9c9c9;border-radius:1px"></div>
<div class="t g" style="right:1664.42px;top:183px;letter-spacing:-0.818px;word-spacing:0.818px;">1,0 KiB</div>
<div class="a" style="left:45px;top:211px;width:7px;height:1px;background:repeating-linear-gradient(90deg,#b4b4b4 0 1px,transparent 1px 2px)"></div>
<svg class="i" style="left:52px;top:203px" width="16" height="16" viewBox="0 0 16 16"><rect x="0.2" y="0.2" width="15.6" height="15.6" fill="#fbfdff"/><rect x="0.2" y="0.2" width="15.6" height="4.4" fill="#a6e2ea"/><rect x="0.2" y="0.2" width="4.4" height="15.6" fill="#a6e2ea"/><rect x="0.2" y="0.2" width="4.2" height="4.2" fill="#84d4de"/><rect x="4.9" y="0.2" width="3.3" height="4.2" fill="#84d4de"/><rect x="8.7" y="0.2" width="3.3" height="4.2" fill="#84d4de"/><rect x="12.5" y="0.2" width="3.3" height="4.2" fill="#84d4de"/><rect x="0.2" y="4.9" width="4.2" height="3.3" fill="#84d4de"/><rect x="4.9" y="4.9" width="3.3" height="3.3" fill="#d6e5f8"/><rect x="8.7" y="4.9" width="3.3" height="3.3" fill="#d6e5f8"/><rect x="12.5" y="4.9" width="3.3" height="3.3" fill="#d6e5f8"/><rect x="0.2" y="8.7" width="4.2" height="3.3" fill="#84d4de"/><rect x="4.9" y="8.7" width="3.3" height="3.3" fill="#d6e5f8"/><rect x="8.7" y="8.7" width="3.3" height="3.3" fill="#d6e5f8"/><rect x="12.5" y="8.7" width="3.3" height="3.3" fill="#d6e5f8"/><rect x="0.2" y="12.5" width="4.2" height="3.3" fill="#84d4de"/><rect x="4.9" y="12.5" width="3.3" height="3.3" fill="#d6e5f8"/><rect x="8.7" y="12.5" width="3.3" height="3.3" fill="#d6e5f8"/><rect x="12.5" y="12.5" width="3.3" height="3.3" fill="#d6e5f8"/></svg>
<div class="t" style="left:74px;top:203px;letter-spacing:-0.122px;word-spacing:0.122px;">mantis_bug_file_table</div>
<div class="a" style="left:205px;top:202px;width:69.5px;height:18px;background:#e9e9e9;border:1px solid #c6c6c6;border-radius:2px"></div>
<div class="t g" style="right:1664.24px;top:203px;letter-spacing:-0.644px;word-spacing:0.644px;">45,1 KiB</div>
<div class="a" style="left:45px;top:231px;width:7px;height:1px;background:repeating-linear-gradient(90deg,#b4b4b4 0 1px,transparent 1px 2px)"></div>
<svg class="i" style="left:52px;top:223px" width="16" height="16" viewBox="0 0 16 16"><rect x="0.2" y="0.2" width="15.6" height="15.6" fill="#fbfdff"/><rect x="0.2" y="0.2" width="15.6" height="4.4" fill="#a6e2ea"/><rect x="0.2" y="0.2" width="4.4" height="15.6" fill="#a6e2ea"/><rect x="0.2" y="0.2" width="4.2" height="4.2" fill="#84d4de"/><rect x="4.9" y="0.2" width="3.3" height="4.2" fill="#84d4de"/><rect x="8.7" y="0.2" width="3.3" height="4.2" fill="#84d4de"/><rect x="12.5" y="0.2" width="3.3" height="4.2" fill="#84d4de"/><rect x="0.2" y="4.9" width="4.2" height="3.3" fill="#84d4de"/><rect x="4.9" y="4.9" width="3.3" height="3.3" fill="#d6e5f8"/><rect x="8.7" y="4.9" width="3.3" height="3.3" fill="#d6e5f8"/><rect x="12.5" y="4.9" width="3.3" height="3.3" fill="#d6e5f8"/><rect x="0.2" y="8.7" width="4.2" height="3.3" fill="#84d4de"/><rect x="4.9" y="8.7" width="3.3" height="3.3" fill="#d6e5f8"/><rect x="8.7" y="8.7" width="3.3" height="3.3" fill="#d6e5f8"/><rect x="12.5" y="8.7" width="3.3" height="3.3" fill="#d6e5f8"/><rect x="0.2" y="12.5" width="4.2" height="3.3" fill="#84d4de"/><rect x="4.9" y="12.5" width="3.3" height="3.3" fill="#d6e5f8"/><rect x="8.7" y="12.5" width="3.3" height="3.3" fill="#d6e5f8"/><rect x="12.5" y="12.5" width="3.3" height="3.3" fill="#d6e5f8"/></svg>
<div class="t" style="left:74px;top:223px;letter-spacing:-0.135px;word-spacing:0.135px;">mantis_bug_history_t...</div>
<div class="a" style="left:205px;top:222px;width:8.5px;height:18px;background:#e9e9e9;border:1px solid #c6c6c6;border-radius:2px"></div>
<div class="t g" style="right:1664.42px;top:223px;letter-spacing:-0.818px;word-spacing:0.818px;">5,5 KiB</div>
<div class="a" style="left:45px;top:251px;width:7px;height:1px;background:repeating-linear-gradient(90deg,#b4b4b4 0 1px,transparent 1px 2px)"></div>
<svg class="i" style="left:52px;top:243px" width="16" height="16" viewBox="0 0 16 16"><rect x="0.2" y="0.2" width="15.6" height="15.6" fill="#fbfdff"/><rect x="0.2" y="0.2" width="15.6" height="4.4" fill="#a6e2ea"/><rect x="0.2" y="0.2" width="4.4" height="15.6" fill="#a6e2ea"/><rect x="0.2" y="0.2" width="4.2" height="4.2" fill="#84d4de"/><rect x="4.9" y="0.2" width="3.3" height="4.2" fill="#84d4de"/><rect x="8.7" y="0.2" width="3.3" height="4.2" fill="#84d4de"/><rect x="12.5" y="0.2" width="3.3" height="4.2" fill="#84d4de"/><rect x="0.2" y="4.9" width="4.2" height="3.3" fill="#84d4de"/><rect x="4.9" y="4.9" width="3.3" height="3.3" fill="#d6e5f8"/><rect x="8.7" y="4.9" width="3.3" height="3.3" fill="#d6e5f8"/><rect x="12.5" y="4.9" width="3.3" height="3.3" fill="#d6e5f8"/><rect x="0.2" y="8.7" width="4.2" height="3.3" fill="#84d4de"/><rect x="4.9" y="8.7" width="3.3" height="3.3" fill="#d6e5f8"/><rect x="8.7" y="8.7" width="3.3" height="3.3" fill="#d6e5f8"/><rect x="12.5" y="8.7" width="3.3" height="3.3" fill="#d6e5f8"/><rect x="0.2" y="12.5" width="4.2" height="3.3" fill="#84d4de"/><rect x="4.9" y="12.5" width="3.3" height="3.3" fill="#d6e5f8"/><rect x="8.7" y="12.5" width="3.3" height="3.3" fill="#d6e5f8"/><rect x="12.5" y="12.5" width="3.3" height="3.3" fill="#d6e5f8"/></svg>
<div class="t" style="left:74px;top:243px;letter-spacing:-0.062px;word-spacing:0.062px;">mantis_bug_monitor_...</div>
<div class="a" style="left:205px;top:242px;width:4.6px;height:18px;background:#e9e9e9;border:1px solid #c6c6c6;border-radius:2px"></div>
<div class="t g" style="right:1664.42px;top:243px;letter-spacing:-0.818px;word-spacing:0.818px;">3,0 KiB</div>
<div class="a" style="left:45px;top:271px;width:7px;height:1px;background:repeating-linear-gradient(90deg,#b4b4b4 0 1px,transparent 1px 2px)"></div>
<svg class="i" style="left:52px;top:263px" width="16" height="16" viewBox="0 0 16 16"><rect x="0.2" y="0.2" width="15.6" height="15.6" fill="#fbfdff"/><rect x="0.2" y="0.2" width="15.6" height="4.4" fill="#a6e2ea"/><rect x="0.2" y="0.2" width="4.4" height="15.6" fill="#a6e2ea"/><rect x="0.2" y="0.2" width="4.2" height="4.2" fill="#84d4de"/><rect x="4.9" y="0.2" width="3.3" height="4.2" fill="#84d4de"/><rect x="8.7" y="0.2" width="3.3" height="4.2" fill="#84d4de"/><rect x="12.5" y="0.2" width="3.3" height="4.2" fill="#84d4de"/><rect x="0.2" y="4.9" width="4.2" height="3.3" fill="#84d4de"/><rect x="4.9" y="4.9" width="3.3" height="3.3" fill="#d6e5f8"/><rect x="8.7" y="4.9" width="3.3" height="3.3" fill="#d6e5f8"/><rect x="12.5" y="4.9" width="3.3" height="3.3" fill="#d6e5f8"/><rect x="0.2" y="8.7" width="4.2" height="3.3" fill="#84d4de"/><rect x="4.9" y="8.7" width="3.3" height="3.3" fill="#d6e5f8"/><rect x="8.7" y="8.7" width="3.3" height="3.3" fill="#d6e5f8"/><rect x="12.5" y="8.7" width="3.3" height="3.3" fill="#d6e5f8"/><rect x="0.2" y="12.5" width="4.2" height="3.3" fill="#84d4de"/><rect x="4.9" y="12.5" width="3.3" height="3.3" fill="#d6e5f8"/><rect x="8.7" y="12.5" width="3.3" height="3.3" fill="#d6e5f8"/><rect x="12.5" y="12.5" width="3.3" height="3.3" fill="#d6e5f8"/></svg>
<div class="t" style="left:74px;top:263px;letter-spacing:-0.135px;word-spacing:0.135px;">mantis_bug_relations...</div>
<div class="a" style="left:205px;top:262px;width:1.5px;height:18px;background:#c9c9c9;border-radius:1px"></div>
<div class="t g" style="right:1664.42px;top:263px;letter-spacing:-0.818px;word-spacing:0.818px;">1,0 KiB</div>
<div class="a" style="left:45px;top:291px;width:7px;height:1px;background:repeating-linear-gradient(90deg,#b4b4b4 0 1px,transparent 1px 2px)"></div>
<svg class="i" style="left:52px;top:283px" width="16" height="16" viewBox="0 0 16 16"><rect x="0.2" y="0.2" width="15.6" height="15.6" fill="#fbfdff"/><rect x="0.2" y="0.2" width="15.6" height="4.4" fill="#a6e2ea"/><rect x="0.2" y="0.2" width="4.4" height="15.6" fill="#a6e2ea"/><rect x="0.2" y="0.2" width="4.2" height="4.2" fill="#84d4de"/><rect x="4.9" y="0.2" width="3.3" height="4.2" fill="#84d4de"/><rect x="8.7" y="0.2" width="3.3" height="4.2" fill="#84d4de"/><rect x="12.5" y="0.2" width="3.3" height="4.2" fill="#84d4de"/><rect x="0.2" y="4.9" width="4.2" height="3.3" fill="#84d4de"/><rect x="4.9" y="4.9" width="3.3" height="3.3" fill="#d6e5f8"/><rect x="8.7" y="4.9" width="3.3" height="3.3" fill="#d6e5f8"/><rect x="12.5" y="4.9" width="3.3" height="3.3" fill="#d6e5f8"/><rect x="0.2" y="8.7" width="4.2" height="3.3" fill="#84d4de"/><rect x="4.9" y="8.7" width="3.3" height="3.3" fill="#d6e5f8"/><rect x="8.7" y="8.7" width="3.3" height="3.3" fill="#d6e5f8"/><rect x="12.5" y="8.7" width="3.3" height="3.3" fill="#d6e5f8"/><rect x="0.2" y="12.5" width="4.2" height="3.3" fill="#84d4de"/><rect x="4.9" y="12.5" width="3.3" height="3.3" fill="#d6e5f8"/><rect x="8.7" y="12.5" width="3.3" height="3.3" fill="#d6e5f8"/><rect x="12.5" y="12.5" width="3.3" height="3.3" fill="#d6e5f8"/></svg>
<div class="t" style="left:74px;top:283px;letter-spacing:-0.177px;word-spacing:0.177px;">mantis_bug_revision_t...</div>
<div class="a" style="left:205px;top:282px;width:1.5px;height:18px;background:#c9c9c9;border-radius:1px"></div>
<div class="t g" style="right:1664.42px;top:283px;letter-spacing:-0.818px;word-spacing:0.818px;">1,0 KiB</div>
<div class="a" style="left:45px;top:311px;width:7px;height:1px;background:repeating-linear-gradient(90deg,#b4b4b4 0 1px,transparent 1px 2px)"></div>
<svg class="i" style="left:52px;top:303px" width="16" height="16" viewBox="0 0 16 16"><rect x="0.2" y="0.2" width="15.6" height="15.6" fill="#fbfdff"/><rect x="0.2" y="0.2" width="15.6" height="4.4" fill="#a6e2ea"/><rect x="0.2" y="0.2" width="4.4" height="15.6" fill="#a6e2ea"/><rect x="0.2" y="0.2" width="4.2" height="4.2" fill="#84d4de"/><rect x="4.9" y="0.2" width="3.3" height="4.2" fill="#84d4de"/><rect x="8.7" y="0.2" width="3.3" height="4.2" fill="#84d4de"/><rect x="12.5" y="0.2" width="3.3" height="4.2" fill="#84d4de"/><rect x="0.2" y="4.9" width="4.2" height="3.3" fill="#84d4de"/><rect x="4.9" y="4.9" width="3.3" height="3.3" fill="#d6e5f8"/><rect x="8.7" y="4.9" width="3.3" height="3.3" fill="#d6e5f8"/><rect x="12.5" y="4.9" width="3.3" height="3.3" fill="#d6e5f8"/><rect x="0.2" y="8.7" width="4.2" height="3.3" fill="#84d4de"/><rect x="4.9" y="8.7" width="3.3" height="3.3" fill="#d6e5f8"/><rect x="8.7" y="8.7" width="3.3" height="3.3" fill="#d6e5f8"/><rect x="12.5" y="8.7" width="3.3" height="3.3" fill="#d6e5f8"/><rect x="0.2" y="12.5" width="4.2" height="3.3" fill="#84d4de"/><rect x="4.9" y="12.5" width="3.3" height="3.3" fill="#d6e5f8"/><rect x="8.7" y="12.5" width="3.3" height="3.3" fill="#d6e5f8"/><rect x="12.5" y="12.5" width="3.3" height="3.3" fill="#d6e5f8"/></svg>
<div class="t" style="left:74px;top:303px;letter-spacing:-0.102px;word-spacing:0.102px;">mantis_bug_table</div>
<div class="a" style="left:205px;top:302px;width:9.7px;height:18px;background:#e9e9e9;border:1px solid #c6c6c6;border-radius:2px"></div>
<div class="t g" style="right:1664.42px;top:303px;letter-spacing:-0.818px;word-spacing:0.818px;">6,3 KiB</div>
<div class="a" style="left:45px;top:331px;width:7px;height:1px;background:repeating-linear-gradient(90deg,#b4b4b4 0 1px,transparent 1px 2px)"></div>
<svg class="i" style="left:52px;top:323px" width="16" height="16" viewBox="0 0 16 16"><rect x="0.2" y="0.2" width="15.6" height="15.6" fill="#fbfdff"/><rect x="0.2" y="0.2" width="15.6" height="4.4" fill="#a6e2ea"/><rect x="0.2" y="0.2" width="4.4" height="15.6" fill="#a6e2ea"/><rect x="0.2" y="0.2" width="4.2" height="4.2" fill="#84d4de"/><rect x="4.9" y="0.2" width="3.3" height="4.2" fill="#84d4de"/><rect x="8.7" y="0.2" width="3.3" height="4.2" fill="#84d4de"/><rect x="12.5" y="0.2" width="3.3" height="4.2" fill="#84d4de"/><rect x="0.2" y="4.9" width="4.2" height="3.3" fill="#84d4de"/><rect x="4.9" y="4.9" width="3.3" height="3.3" fill="#d6e5f8"/><rect x="8.7" y="4.9" width="3.3" height="3.3" fill="#d6e5f8"/><rect x="12.5" y="4.9" width="3.3" height="3.3" fill="#d6e5f8"/><rect x="0.2" y="8.7" width="4.2" height="3.3" fill="#84d4de"/><rect x="4.9" y="8.7" width="3.3" height="3.3" fill="#d6e5f8"/><rect x="8.7" y="8.7" width="3.3" height="3.3" fill="#d6e5f8"/><rect x="12.5" y="8.7" width="3.3" height="3.3" fill="#d6e5f8"/><rect x="0.2" y="12.5" width="4.2" height="3.3" fill="#84d4de"/><rect x="4.9" y="12.5" width="3.3" height="3.3" fill="#d6e5f8"/><rect x="8.7" y="12.5" width="3.3" height="3.3" fill="#d6e5f8"/><rect x="12.5" y="12.5" width="3.3" height="3.3" fill="#d6e5f8"/></svg>
<div class="t" style="left:74px;top:323px;letter-spacing:-0.147px;word-spacing:0.147px;">mantis_bug_tag_table</div>
<div class="a" style="left:205px;top:322px;width:4.8px;height:18px;background:#e9e9e9;border:1px solid #c6c6c6;border-radius:2px"></div>
<div class="t g" style="right:1664.42px;top:323px;letter-spacing:-0.818px;word-spacing:0.818px;">3,1 KiB</div>
<div class="a" style="left:45px;top:351px;width:7px;height:1px;background:repeating-linear-gradient(90deg,#b4b4b4 0 1px,transparent 1px 2px)"></div>
<svg class="i" style="left:52px;top:343px" width="16" height="16" viewBox="0 0 16 16"><rect x="0.2" y="0.2" width="15.6" height="15.6" fill="#fbfdff"/><rect x="0.2" y="0.2" width="15.6" height="4.4" fill="#a6e2ea"/><rect x="0.2" y="0.2" width="4.4" height="15.6" fill="#a6e2ea"/><rect x="0.2" y="0.2" width="4.2" height="4.2" fill="#84d4de"/><rect x="4.9" y="0.2" width="3.3" height="4.2" fill="#84d4de"/><rect x="8.7" y="0.2" width="3.3" height="4.2" fill="#84d4de"/><rect x="12.5" y="0.2" width="3.3" height="4.2" fill="#84d4de"/><rect x="0.2" y="4.9" width="4.2" height="3.3" fill="#84d4de"/><rect x="4.9" y="4.9" width="3.3" height="3.3" fill="#d6e5f8"/><rect x="8.7" y="4.9" width="3.3" height="3.3" fill="#d6e5f8"/><rect x="12.5" y="4.9" width="3.3" height="3.3" fill="#d6e5f8"/><rect x="0.2" y="8.7" width="4.2" height="3.3" fill="#84d4de"/><rect x="4.9" y="8.7" width="3.3" height="3.3" fill="#d6e5f8"/><rect x="8.7" y="8.7" width="3.3" height="3.3" fill="#d6e5f8"/><rect x="12.5" y="8.7" width="3.3" height="3.3" fill="#d6e5f8"/><rect x="0.2" y="12.5" width="4.2" height="3.3" fill="#84d4de"/><rect x="4.9" y="12.5" width="3.3" height="3.3" fill="#d6e5f8"/><rect x="8.7" y="12.5" width="3.3" height="3.3" fill="#d6e5f8"/><rect x="12.5" y="12.5" width="3.3" height="3.3" fill="#d6e5f8"/></svg>
<div class="t" style="left:74px;top:343px;letter-spacing:-0.163px;word-spacing:0.163px;">mantis_bug_text_table</div>
<div class="a" style="left:205px;top:342px;width:3.5px;height:18px;background:#e9e9e9;border:1px solid #c6c6c6;border-radius:2px"></div>
<div class="t g" style="right:1664.42px;top:343px;letter-spacing:-0.818px;word-spacing:0.818px;">2,3 KiB</div>
<div class="a" style="left:45px;top:371px;width:7px;height:1px;background:repeating-linear-gradient(90deg,#b4b4b4 0 1px,transparent 1px 2px)"></div>
<svg class="i" style="left:52px;top:363px" width="16" height="16" viewBox="0 0 16 16"><rect x="0.2" y="0.2" width="15.6" height="15.6" fill="#fbfdff"/><rect x="0.2" y="0.2" width="15.6" height="4.4" fill="#a6e2ea"/><rect x="0.2" y="0.2" width="4.4" height="15.6" fill="#a6e2ea"/><rect x="0.2" y="0.2" width="4.2" height="4.2" fill="#84d4de"/><rect x="4.9" y="0.2" width="3.3" height="4.2" fill="#84d4de"/><rect x="8.7" y="0.2" width="3.3" height="4.2" fill="#84d4de"/><rect x="12.5" y="0.2" width="3.3" height="4.2" fill="#84d4de"/><rect x="0.2" y="4.9" width="4.2" height="3.3" fill="#84d4de"/><rect x="4.9" y="4.9" width="3.3" height="3.3" fill="#d6e5f8"/><rect x="8.7" y="4.9" width="3.3" height="3.3" fill="#d6e5f8"/><rect x="12.5" y="4.9" width="3.3" height="3.3" fill="#d6e5f8"/><rect x="0.2" y="8.7" width="4.2" height="3.3" fill="#84d4de"/><rect x="4.9" y="8.7" width="3.3" height="3.3" fill="#d6e5f8"/><rect x="8.7" y="8.7" width="3.3" height="3.3" fill="#d6e5f8"/><rect x="12.5" y="8.7" width="3.3" height="3.3" fill="#d6e5f8"/><rect x="0.2" y="12.5" width="4.2" height="3.3" fill="#84d4de"/><rect x="4.9" y="12.5" width="3.3" height="3.3" fill="#d6e5f8"/><rect x="8.7" y="12.5" width="3.3" height="3.3" fill="#d6e5f8"/><rect x="12.5" y="12.5" width="3.3" height="3.3" fill="#d6e5f8"/></svg>
<div class="t" style="left:74px;top:363px;letter-spacing:-0.112px;word-spacing:0.112px;">mantis_category_table</div>
<div class="a" style="left:205px;top:362px;width:7.9px;height:18px;background:#e9e9e9;border:1px solid #c6c6c6;border-radius:2px"></div>
<div class="t g" style="right:1664.42px;top:363px;letter-spacing:-0.818px;word-spacing:0.818px;">5,1 KiB</div>
<div class="a" style="left:45px;top:391px;width:7px;height:1px;background:repeating-linear-gradient(90deg,#b4b4b4 0 1px,transparent 1px 2px)"></div>
<svg class="i" style="left:52px;top:383px" width="16" height="16" viewBox="0 0 16 16"><rect x="0.2" y="0.2" width="15.6" height="15.6" fill="#fbfdff"/><rect x="0.2" y="0.2" width="15.6" height="4.4" fill="#a6e2ea"/><rect x="0.2" y="0.2" width="4.4" height="15.6" fill="#a6e2ea"/><rect x="0.2" y="0.2" width="4.2" height="4.2" fill="#84d4de"/><rect x="4.9" y="0.2" width="3.3" height="4.2" fill="#84d4de"/><rect x="8.7" y="0.2" width="3.3" height="4.2" fill="#84d4de"/><rect x="12.5" y="0.2" width="3.3" height="4.2" fill="#84d4de"/><rect x="0.2" y="4.9" width="4.2" height="3.3" fill="#84d4de"/><rect x="4.9" y="4.9" width="3.3" height="3.3" fill="#d6e5f8"/><rect x="8.7" y="4.9" width="3.3" height="3.3" fill="#d6e5f8"/><rect x="12.5" y="4.9" width="3.3" height="3.3" fill="#d6e5f8"/><rect x="0.2" y="8.7" width="4.2" height="3.3" fill="#84d4de"/><rect x="4.9" y="8.7" width="3.3" height="3.3" fill="#d6e5f8"/><rect x="8.7" y="8.7" width="3.3" height="3.3" fill="#d6e5f8"/><rect x="12.5" y="8.7" width="3.3" height="3.3" fill="#d6e5f8"/><rect x="0.2" y="12.5" width="4.2" height="3.3" fill="#84d4de"/><rect x="4.9" y="12.5" width="3.3" height="3.3" fill="#d6e5f8"/><rect x="8.7" y="12.5" width="3.3" height="3.3" fill="#d6e5f8"/><rect x="12.5" y="12.5" width="3.3" height="3.3" fill="#d6e5f8"/></svg>
<div class="t" style="left:74px;top:383px;letter-spacing:-0.019px;word-spacing:0.019px;">mantis_config_table</div>
<div class="a" style="left:205px;top:382px;width:3.2px;height:18px;background:#e9e9e9;border:1px solid #c6c6c6;border-radius:2px"></div>
<div class="t g" style="right:1664.42px;top:383px;letter-spacing:-0.818px;word-spacing:0.818px;">2,1 KiB</div>
<div class="a" style="left:45px;top:411px;width:7px;height:1px;background:repeating-linear-gradient(90deg,#b4b4b4 0 1px,transparent 1px 2px)"></div>
<svg class="i" style="left:52px;top:403px" width="16" height="16" viewBox="0 0 16 16"><rect x="0.2" y="0.2" width="15.6" height="15.6" fill="#fbfdff"/><rect x="0.2" y="0.2" width="15.6" height="4.4" fill="#a6e2ea"/><rect x="0.2" y="0.2" width="4.4" height="15.6" fill="#a6e2ea"/><rect x="0.2" y="0.2" width="4.2" height="4.2" fill="#84d4de"/><rect x="4.9" y="0.2" width="3.3" height="4.2" fill="#84d4de"/><rect x="8.7" y="0.2" width="3.3" height="4.2" fill="#84d4de"/><rect x="12.5" y="0.2" width="3.3" height="4.2" fill="#84d4de"/><rect x="0.2" y="4.9" width="4.2" height="3.3" fill="#84d4de"/><rect x="4.9" y="4.9" width="3.3" height="3.3" fill="#d6e5f8"/><rect x="8.7" y="4.9" width="3.3" height="3.3" fill="#d6e5f8"/><rect x="12.5" y="4.9" width="3.3" height="3.3" fill="#d6e5f8"/><rect x="0.2" y="8.7" width="4.2" height="3.3" fill="#84d4de"/><rect x="4.9" y="8.7" width="3.3" height="3.3" fill="#d6e5f8"/><rect x="8.7" y="8.7" width="3.3" height="3.3" fill="#d6e5f8"/><rect x="12.5" y="8.7" width="3.3" height="3.3" fill="#d6e5f8"/><rect x="0.2" y="12.5" width="4.2" height="3.3" fill="#84d4de"/><rect x="4.9" y="12.5" width="3.3" height="3.3" fill="#d6e5f8"/><rect x="8.7" y="12.5" width="3.3" height="3.3" fill="#d6e5f8"/><rect x="12.5" y="12.5" width="3.3" height="3.3" fill="#d6e5f8"/></svg>
<div class="t" style="left:74px;top:403px;letter-spacing:-0.134px;word-spacing:0.134px;">mantis_custom_field_...</div>
<div class="a" style="left:205px;top:402px;width:1.5px;height:18px;background:#c9c9c9;border-radius:1px"></div>
<div class="t g" style="right:1664.42px;top:403px;letter-spacing:-0.818px;word-spacing:0.818px;">1,0 KiB</div>
<div class="a" style="left:45px;top:431px;width:7px;height:1px;background:repeating-linear-gradient(90deg,#b4b4b4 0 1px,transparent 1px 2px)"></div>
<svg class="i" style="left:52px;top:423px" width="16" height="16" viewBox="0 0 16 16"><rect x="0.2" y="0.2" width="15.6" height="15.6" fill="#fbfdff"/><rect x="0.2" y="0.2" width="15.6" height="4.4" fill="#a6e2ea"/><rect x="0.2" y="0.2" width="4.4" height="15.6" fill="#a6e2ea"/><rect x="0.2" y="0.2" width="4.2" height="4.2" fill="#84d4de"/><rect x="4.9" y="0.2" width="3.3" height="4.2" fill="#84d4de"/><rect x="8.7" y="0.2" width="3.3" height="4.2" fill="#84d4de"/><rect x="12.5" y="0.2" width="3.3" height="4.2" fill="#84d4de"/><rect x="0.2" y="4.9" width="4.2" height="3.3" fill="#84d4de"/><rect x="4.9" y="4.9" width="3.3" height="3.3" fill="#d6e5f8"/><rect x="8.7" y="4.9" width="3.3" height="3.3" fill="#d6e5f8"/><rect x="12.5" y="4.9" width="3.3" height="3.3" fill="#d6e5f8"/><rect x="0.2" y="8.7" width="4.2" height="3.3" fill="#84d4de"/><rect x="4.9" y="8.7" width="3.3" height="3.3" fill="#d6e5f8"/><rect x="8.7" y="8.7" width="3.3" height="3.3" fill="#d6e5f8"/><rect x="12.5" y="8.7" width="3.3" height="3.3" fill="#d6e5f8"/><rect x="0.2" y="12.5" width="4.2" height="3.3" fill="#84d4de"/><rect x="4.9" y="12.5" width="3.3" height="3.3" fill="#d6e5f8"/><rect x="8.7" y="12.5" width="3.3" height="3.3" fill="#d6e5f8"/><rect x="12.5" y="12.5" width="3.3" height="3.3" fill="#d6e5f8"/></svg>
<div class="t" style="left:74px;top:423px;letter-spacing:-0.134px;word-spacing:0.134px;">mantis_custom_field_...</div>
<div class="a" style="left:205px;top:422px;width:1.5px;height:18px;background:#c9c9c9;border-radius:1px"></div>
<div class="t g" style="right:1664.42px;top:423px;letter-spacing:-0.818px;word-spacing:0.818px;">1,0 KiB</div>
<div class="a" style="left:45px;top:451px;width:7px;height:1px;background:repeating-linear-gradient(90deg,#b4b4b4 0 1px,transparent 1px 2px)"></div>
<svg class="i" style="left:52px;top:443px" width="16" height="16" viewBox="0 0 16 16"><rect x="0.2" y="0.2" width="15.6" height="15.6" fill="#fbfdff"/><rect x="0.2" y="0.2" width="15.6" height="4.4" fill="#a6e2ea"/><rect x="0.2" y="0.2" width="4.4" height="15.6" fill="#a6e2ea"/><rect x="0.2" y="0.2" width="4.2" height="4.2" fill="#84d4de"/><rect x="4.9" y="0.2" width="3.3" height="4.2" fill="#84d4de"/><rect x="8.7" y="0.2" width="3.3" height="4.2" fill="#84d4de"/><rect x="12.5" y="0.2" width="3.3" height="4.2" fill="#84d4de"/><rect x="0.2" y="4.9" width="4.2" height="3.3" fill="#84d4de"/><rect x="4.9" y="4.9" width="3.3" height="3.3" fill="#d6e5f8"/><rect x="8.7" y="4.9" width="3.3" height="3.3" fill="#d6e5f8"/><rect x="12.5" y="4.9" width="3.3" height="3.3" fill="#d6e5f8"/><rect x="0.2" y="8.7" width="4.2" height="3.3" fill="#84d4de"/><rect x="4.9" y="8.7" width="3.3" height="3.3" fill="#d6e5f8"/><rect x="8.7" y="8.7" width="3.3" height="3.3" fill="#d6e5f8"/><rect x="12.5" y="8.7" width="3.3" height="3.3" fill="#d6e5f8"/><rect x="0.2" y="12.5" width="4.2" height="3.3" fill="#84d4de"/><rect x="4.9" y="12.5" width="3.3" height="3.3" fill="#d6e5f8"/><rect x="8.7" y="12.5" width="3.3" height="3.3" fill="#d6e5f8"/><rect x="12.5" y="12.5" width="3.3" height="3.3" fill="#d6e5f8"/></svg>
<div class="t" style="left:74px;top:443px;letter-spacing:-0.134px;word-spacing:0.134px;">mantis_custom_field_...</div>
<div class="a" style="left:205px;top:442px;width:1.5px;height:18px;background:#c9c9c9;border-radius:1px"></div>
<div class="t g" style="right:1664.42px;top:443px;letter-spacing:-0.818px;word-spacing:0.818px;">1,0 KiB</div>
<div class="a" style="left:45px;top:471px;width:7px;height:1px;background:repeating-linear-gradient(90deg,#b4b4b4 0 1px,transparent 1px 2px)"></div>
<svg class="i" style="left:52px;top:463px" width="16" height="16" viewBox="0 0 16 16"><rect x="0.2" y="0.2" width="15.6" height="15.6" fill="#fbfdff"/><rect x="0.2" y="0.2" width="15.6" height="4.4" fill="#a6e2ea"/><rect x="0.2" y="0.2" width="4.4" height="15.6" fill="#a6e2ea"/><rect x="0.2" y="0.2" width="4.2" height="4.2" fill="#84d4de"/><rect x="4.9" y="0.2" width="3.3" height="4.2" fill="#84d4de"/><rect x="8.7" y="0.2" width="3.3" height="4.2" fill="#84d4de"/><rect x="12.5" y="0.2" width="3.3" height="4.2" fill="#84d4de"/><rect x="0.2" y="4.9" width="4.2" height="3.3" fill="#84d4de"/><rect x="4.9" y="4.9" width="3.3" height="3.3" fill="#d6e5f8"/><rect x="8.7" y="4.9" width="3.3" height="3.3" fill="#d6e5f8"/><rect x="12.5" y="4.9" width="3.3" height="3.3" fill="#d6e5f8"/><rect x="0.2" y="8.7" width="4.2" height="3.3" fill="#84d4de"/><rect x="4.9" y="8.7" width="3.3" height="3.3" fill="#d6e5f8"/><rect x="8.7" y="8.7" width="3.3" height="3.3" fill="#d6e5f8"/><rect x="12.5" y="8.7" width="3.3" height="3.3" fill="#d6e5f8"/><rect x="0.2" y="12.5" width="4.2" height="3.3" fill="#84d4de"/><rect x="4.9" y="12.5" width="3.3" height="3.3" fill="#d6e5f8"/><rect x="8.7" y="12.5" width="3.3" height="3.3" fill="#d6e5f8"/><rect x="12.5" y="12.5" width="3.3" height="3.3" fill="#d6e5f8"/></svg>
<div class="t" style="left:74px;top:463px;letter-spacing:-0.129px;word-spacing:0.129px;">mantis_email_table</div>
<div class="a" style="left:205px;top:462px;width:19.6px;height:18px;background:#e9e9e9;border:1px solid #c6c6c6;border-radius:2px"></div>
<div class="t g" style="right:1664.24px;top:463px;letter-spacing:-0.644px;word-spacing:0.644px;">12,7 KiB</div>
<div class="a" style="left:45px;top:491px;width:7px;height:1px;background:repeating-linear-gradient(90deg,#b4b4b4 0 1px,transparent 1px 2px)"></div>
<svg class="i" style="left:52px;top:483px" width="16" height="16" viewBox="0 0 16 16"><rect x="0.2" y="0.2" width="15.6" height="15.6" fill="#fbfdff"/><rect x="0.2" y="0.2" width="15.6" height="4.4" fill="#a6e2ea"/><rect x="0.2" y="0.2" width="4.4" height="15.6" fill="#a6e2ea"/><rect x="0.2" y="0.2" width="4.2" height="4.2" fill="#84d4de"/><rect x="4.9" y="0.2" width="3.3" height="4.2" fill="#84d4de"/><rect x="8.7" y="0.2" width="3.3" height="4.2" fill="#84d4de"/><rect x="12.5" y="0.2" width="3.3" height="4.2" fill="#84d4de"/><rect x="0.2" y="4.9" width="4.2" height="3.3" fill="#84d4de"/><rect x="4.9" y="4.9" width="3.3" height="3.3" fill="#d6e5f8"/><rect x="8.7" y="4.9" width="3.3" height="3.3" fill="#d6e5f8"/><rect x="12.5" y="4.9" width="3.3" height="3.3" fill="#d6e5f8"/><rect x="0.2" y="8.7" width="4.2" height="3.3" fill="#84d4de"/><rect x="4.9" y="8.7" width="3.3" height="3.3" fill="#d6e5f8"/><rect x="8.7" y="8.7" width="3.3" height="3.3" fill="#d6e5f8"/><rect x="12.5" y="8.7" width="3.3" height="3.3" fill="#d6e5f8"/><rect x="0.2" y="12.5" width="4.2" height="3.3" fill="#84d4de"/><rect x="4.9" y="12.5" width="3.3" height="3.3" fill="#d6e5f8"/><rect x="8.7" y="12.5" width="3.3" height="3.3" fill="#d6e5f8"/><rect x="12.5" y="12.5" width="3.3" height="3.3" fill="#d6e5f8"/></svg>
<div class="t" style="left:74px;top:483px;letter-spacing:-0.115px;word-spacing:0.115px;">mantis_filters_table</div>
<div class="a" style="left:205px;top:482px;width:1.5px;height:18px;background:#c9c9c9;border-radius:1px"></div>
<div class="t g" style="right:1664.42px;top:483px;letter-spacing:-0.818px;word-spacing:0.818px;">1,0 KiB</div>
<div class="a" style="left:45px;top:511px;width:7px;height:1px;background:repeating-linear-gradient(90deg,#b4b4b4 0 1px,transparent 1px 2px)"></div>
<svg class="i" style="left:52px;top:503px" width="16" height="16" viewBox="0 0 16 16"><rect x="0.2" y="0.2" width="15.6" height="15.6" fill="#fbfdff"/><rect x="0.2" y="0.2" width="15.6" height="4.4" fill="#a6e2ea"/><rect x="0.2" y="0.2" width="4.4" height="15.6" fill="#a6e2ea"/><rect x="0.2" y="0.2" width="4.2" height="4.2" fill="#84d4de"/><rect x="4.9" y="0.2" width="3.3" height="4.2" fill="#84d4de"/><rect x="8.7" y="0.2" width="3.3" height="4.2" fill="#84d4de"/><rect x="12.5" y="0.2" width="3.3" height="4.2" fill="#84d4de"/><rect x="0.2" y="4.9" width="4.2" height="3.3" fill="#84d4de"/><rect x="4.9" y="4.9" width="3.3" height="3.3" fill="#d6e5f8"/><rect x="8.7" y="4.9" width="3.3" height="3.3" fill="#d6e5f8"/><rect x="12.5" y="4.9" width="3.3" height="3.3" fill="#d6e5f8"/><rect x="0.2" y="8.7" width="4.2" height="3.3" fill="#84d4de"/><rect x="4.9" y="8.7" width="3.3" height="3.3" fill="#d6e5f8"/><rect x="8.7" y="8.7" width="3.3" height="3.3" fill="#d6e5f8"/><rect x="12.5" y="8.7" width="3.3" height="3.3" fill="#d6e5f8"/><rect x="0.2" y="12.5" width="4.2" height="3.3" fill="#84d4de"/><rect x="4.9" y="12.5" width="3.3" height="3.3" fill="#d6e5f8"/><rect x="8.7" y="12.5" width="3.3" height="3.3" fill="#d6e5f8"/><rect x="12.5" y="12.5" width="3.3" height="3.3" fill="#d6e5f8"/></svg>
<div class="t" style="left:74px;top:503px;letter-spacing:-0.22px;word-spacing:0.22px;">mantis_news_table</div>
<div class="a" style="left:205px;top:502px;width:1.5px;height:18px;background:#c9c9c9;border-radius:1px"></div>
<div class="t g" style="right:1664.42px;top:503px;letter-spacing:-0.818px;word-spacing:0.818px;">1,0 KiB</div>
<div class="a" style="left:45px;top:531px;width:7px;height:1px;background:repeating-linear-gradient(90deg,#b4b4b4 0 1px,transparent 1px 2px)"></div>
<svg class="i" style="left:52px;top:523px" width="16" height="16" viewBox="0 0 16 16"><rect x="0.2" y="0.2" width="15.6" height="15.6" fill="#fbfdff"/><rect x="0.2" y="0.2" width="15.6" height="4.4" fill="#a6e2ea"/><rect x="0.2" y="0.2" width="4.4" height="15.6" fill="#a6e2ea"/><rect x="0.2" y="0.2" width="4.2" height="4.2" fill="#84d4de"/><rect x="4.9" y="0.2" width="3.3" height="4.2" fill="#84d4de"/><rect x="8.7" y="0.2" width="3.3" height="4.2" fill="#84d4de"/><rect x="12.5" y="0.2" width="3.3" height="4.2" fill="#84d4de"/><rect x="0.2" y="4.9" width="4.2" height="3.3" fill="#84d4de"/><rect x="4.9" y="4.9" width="3.3" height="3.3" fill="#d6e5f8"/><rect x="8.7" y="4.9" width="3.3" height="3.3" fill="#d6e5f8"/><rect x="12.5" y="4.9" width="3.3" height="3.3" fill="#d6e5f8"/><rect x="0.2" y="8.7" width="4.2" height="3.3" fill="#84d4de"/><rect x="4.9" y="8.7" width="3.3" height="3.3" fill="#d6e5f8"/><rect x="8.7" y="8.7" width="3.3" height="3.3" fill="#d6e5f8"/><rect x="12.5" y="8.7" width="3.3" height="3.3" fill="#d6e5f8"/><rect x="0.2" y="12.5" width="4.2" height="3.3" fill="#84d4de"/><rect x="4.9" y="12.5" width="3.3" height="3.3" fill="#d6e5f8"/><rect x="8.7" y="12.5" width="3.3" height="3.3" fill="#d6e5f8"/><rect x="12.5" y="12.5" width="3.3" height="3.3" fill="#d6e5f8"/></svg>
<div class="t" style="left:74px;top:523px;letter-spacing:-0.019px;word-spacing:0.019px;">mantis_plugin_table</div>
<div class="a" style="left:205px;top:522px;width:3.1px;height:18px;background:#e9e9e9;border:1px solid #c6c6c6;border-radius:2px"></div>
<div class="t g" style="right:1664.42px;top:523px;letter-spacing:-0.818px;word-spacing:0.818px;">2,0 KiB</div>
<div class="a" style="left:45px;top:551px;width:7px;height:1px;background:repeating-linear-gradient(90deg,#b4b4b4 0 1px,transparent 1px 2px)"></div>
<svg class="i" style="left:52px;top:543px" width="16" height="16" viewBox="0 0 16 16"><rect x="0.2" y="0.2" width="15.6" height="15.6" fill="#fbfdff"/><rect x="0.2" y="0.2" width="15.6" height="4.4" fill="#a6e2ea"/><rect x="0.2" y="0.2" width="4.4" height="15.6" fill="#a6e2ea"/><rect x="0.2" y="0.2" width="4.2" height="4.2" fill="#84d4de"/><rect x="4.9" y="0.2" width="3.3" height="4.2" fill="#84d4de"/><rect x="8.7" y="0.2" width="3.3" height="4.2" fill="#84d4de"/><rect x="12.5" y="0.2" width="3.3" height="4.2" fill="#84d4de"/><rect x="0.2" y="4.9" width="4.2" height="3.3" fill="#84d4de"/><rect x="4.9" y="4.9" width="3.3" height="3.3" fill="#d6e5f8"/><rect x="8.7" y="4.9" width="3.3" height="3.3" fill="#d6e5f8"/><rect x="12.5" y="4.9" width="3.3" height="3.3" fill="#d6e5f8"/><rect x="0.2" y="8.7" width="4.2" height="3.3" fill="#84d4de"/><rect x="4.9" y="8.7" width="3.3" height="3.3" fill="#d6e5f8"/><rect x="8.7" y="8.7" width="3.3" height="3.3" fill="#d6e5f8"/><rect x="12.5" y="8.7" width="3.3" height="3.3" fill="#d6e5f8"/><rect x="0.2" y="12.5" width="4.2" height="3.3" fill="#84d4de"/><rect x="4.9" y="12.5" width="3.3" height="3.3" fill="#d6e5f8"/><rect x="8.7" y="12.5" width="3.3" height="3.3" fill="#d6e5f8"/><rect x="12.5" y="12.5" width="3.3" height="3.3" fill="#d6e5f8"/></svg>
<div class="t" style="left:74px;top:543px;letter-spacing:-0.151px;word-spacing:0.151px;">mantis_project_file_ta...</div>
<div class="a" style="left:205px;top:542px;width:1.5px;height:18px;background:#c9c9c9;border-radius:1px"></div>
<div class="t g" style="right:1664.42px;top:543px;letter-spacing:-0.818px;word-spacing:0.818px;">1,0 KiB</div>
<div class="a" style="left:45px;top:571px;width:7px;height:1px;background:repeating-linear-gradient(90deg,#b4b4b4 0 1px,transparent 1px 2px)"></div>
<svg class="i" style="left:52px;top:563px" width="16" height="16" viewBox="0 0 16 16"><rect x="0.2" y="0.2" width="15.6" height="15.6" fill="#fbfdff"/><rect x="0.2" y="0.2" width="15.6" height="4.4" fill="#a6e2ea"/><rect x="0.2" y="0.2" width="4.4" height="15.6" fill="#a6e2ea"/><rect x="0.2" y="0.2" width="4.2" height="4.2" fill="#84d4de"/><rect x="4.9" y="0.2" width="3.3" height="4.2" fill="#84d4de"/><rect x="8.7" y="0.2" width="3.3" height="4.2" fill="#84d4de"/><rect x="12.5" y="0.2" width="3.3" height="4.2" fill="#84d4de"/><rect x="0.2" y="4.9" width="4.2" height="3.3" fill="#84d4de"/><rect x="4.9" y="4.9" width="3.3" height="3.3" fill="#d6e5f8"/><rect x="8.7" y="4.9" width="3.3" height="3.3" fill="#d6e5f8"/><rect x="12.5" y="4.9" width="3.3" height="3.3" fill="#d6e5f8"/><rect x="0.2" y="8.7" width="4.2" height="3.3" fill="#84d4de"/><rect x="4.9" y="8.7" width="3.3" height="3.3" fill="#d6e5f8"/><rect x="8.7" y="8.7" width="3.3" height="3.3" fill="#d6e5f8"/><rect x="12.5" y="8.7" width="3.3" height="3.3" fill="#d6e5f8"/><rect x="0.2" y="12.5" width="4.2" height="3.3" fill="#84d4de"/><rect x="4.9" y="12.5" width="3.3" height="3.3" fill="#d6e5f8"/><rect x="8.7" y="12.5" width="3.3" height="3.3" fill="#d6e5f8"/><rect x="12.5" y="12.5" width="3.3" height="3.3" fill="#d6e5f8"/></svg>
<div class="t" style="left:74px;top:563px;letter-spacing:-0.114px;word-spacing:0.114px;">mantis_project_hierar...</div>
<div class="a" style="left:205px;top:562px;width:1.5px;height:18px;background:#c9c9c9;border-radius:1px"></div>
<div class="t g" style="right:1664.42px;top:563px;letter-spacing:-0.818px;word-spacing:0.818px;">1,0 KiB</div>
<div class="a" style="left:45px;top:591px;width:7px;height:1px;background:repeating-linear-gradient(90deg,#b4b4b4 0 1px,transparent 1px 2px)"></div>
<svg class="i" style="left:52px;top:583px" width="16" height="16" viewBox="0 0 16 16"><rect x="0.2" y="0.2" width="15.6" height="15.6" fill="#fbfdff"/><rect x="0.2" y="0.2" width="15.6" height="4.4" fill="#a6e2ea"/><rect x="0.2" y="0.2" width="4.4" height="15.6" fill="#a6e2ea"/><rect x="0.2" y="0.2" width="4.2" height="4.2" fill="#84d4de"/><rect x="4.9" y="0.2" width="3.3" height="4.2" fill="#84d4de"/><rect x="8.7" y="0.2" width="3.3" height="4.2" fill="#84d4de"/><rect x="12.5" y="0.2" width="3.3" height="4.2" fill="#84d4de"/><rect x="0.2" y="4.9" width="4.2" height="3.3" fill="#84d4de"/><rect x="4.9" y="4.9" width="3.3" height="3.3" fill="#d6e5f8"/><rect x="8.7" y="4.9" width="3.3" height="3.3" fill="#d6e5f8"/><rect x="12.5" y="4.9" width="3.3" height="3.3" fill="#d6e5f8"/><rect x="0.2" y="8.7" width="4.2" height="3.3" fill="#84d4de"/><rect x="4.9" y="8.7" width="3.3" height="3.3" fill="#d6e5f8"/><rect x="8.7" y="8.7" width="3.3" height="3.3" fill="#d6e5f8"/><rect x="12.5" y="8.7" width="3.3" height="3.3" fill="#d6e5f8"/><rect x="0.2" y="12.5" width="4.2" height="3.3" fill="#84d4de"/><rect x="4.9" y="12.5" width="3.3" height="3.3" fill="#d6e5f8"/><rect x="8.7" y="12.5" width="3.3" height="3.3" fill="#d6e5f8"/><rect x="12.5" y="12.5" width="3.3" height="3.3" fill="#d6e5f8"/></svg>
<div class="t" style="left:74px;top:583px;letter-spacing:-0.075px;word-spacing:0.075px;">mantis_project_table</div>
<div class="a" style="left:205px;top:582px;width:9.4px;height:18px;background:#e9e9e9;border:1px solid #c6c6c6;border-radius:2px"></div>
<div class="t g" style="right:1664.42px;top:583px;letter-spacing:-0.818px;word-spacing:0.818px;">6,1 KiB</div>
<div class="a" style="left:45px;top:611px;width:7px;height:1px;background:repeating-linear-gradient(90deg,#b4b4b4 0 1px,transparent 1px 2px)"></div>
<svg class="i" style="left:52px;top:603px" width="16" height="16" viewBox="0 0 16 16"><rect x="0.2" y="0.2" width="15.6" height="15.6" fill="#fbfdff"/><rect x="0.2" y="0.2" width="15.6" height="4.4" fill="#a6e2ea"/><rect x="0.2" y="0.2" width="4.4" height="15.6" fill="#a6e2ea"/><rect x="0.2" y="0.2" width="4.2" height="4.2" fill="#84d4de"/><rect x="4.9" y="0.2" width="3.3" height="4.2" fill="#84d4de"/><rect x="8.7" y="0.2" width="3.3" height="4.2" fill="#84d4de"/><rect x="12.5" y="0.2" width="3.3" height="4.2" fill="#84d4de"/><rect x="0.2" y="4.9" width="4.2" height="3.3" fill="#84d4de"/><rect x="4.9" y="4.9" width="3.3" height="3.3" fill="#d6e5f8"/><rect x="8.7" y="4.9" width="3.3" height="3.3" fill="#d6e5f8"/><rect x="12.5" y="4.9" width="3.3" height="3.3" fill="#d6e5f8"/><rect x="0.2" y="8.7" width="4.2" height="3.3" fill="#84d4de"/><rect x="4.9" y="8.7" width="3.3" height="3.3" fill="#d6e5f8"/><rect x="8.7" y="8.7" width="3.3" height="3.3" fill="#d6e5f8"/><rect x="12.5" y="8.7" width="3.3" height="3.3" fill="#d6e5f8"/><rect x="0.2" y="12.5" width="4.2" height="3.3" fill="#84d4de"/><rect x="4.9" y="12.5" width="3.3" height="3.3" fill="#d6e5f8"/><rect x="8.7" y="12.5" width="3.3" height="3.3" fill="#d6e5f8"/><rect x="12.5" y="12.5" width="3.3" height="3.3" fill="#d6e5f8"/></svg>
<div class="t" style="left:74px;top:603px;letter-spacing:-0.207px;word-spacing:0.207px;">mantis_project_user_li...</div>
<div class="a" style="left:205px;top:602px;width:1.5px;height:18px;background:#c9c9c9;border-radius:1px"></div>
<div class="t g" style="right:1664.42px;top:603px;letter-spacing:-0.818px;word-spacing:0.818px;">1,0 KiB</div>
<div class="a" style="left:45px;top:631px;width:7px;height:1px;background:repeating-linear-gradient(90deg,#b4b4b4 0 1px,transparent 1px 2px)"></div>
<svg class="i" style="left:52px;top:623px" width="16" height="16" viewBox="0 0 16 16"><rect x="0.2" y="0.2" width="15.6" height="15.6" fill="#fbfdff"/><rect x="0.2" y="0.2" width="15.6" height="4.4" fill="#a6e2ea"/><rect x="0.2" y="0.2" width="4.4" height="15.6" fill="#a6e2ea"/><rect x="0.2" y="0.2" width="4.2" height="4.2" fill="#84d4de"/><rect x="4.9" y="0.2" width="3.3" height="4.2" fill="#84d4de"/><rect x="8.7" y="0.2" width="3.3" height="4.2" fill="#84d4de"/><rect x="12.5" y="0.2" width="3.3" height="4.2" fill="#84d4de"/><rect x="0.2" y="4.9" width="4.2" height="3.3" fill="#84d4de"/><rect x="4.9" y="4.9" width="3.3" height="3.3" fill="#d6e5f8"/><rect x="8.7" y="4.9" width="3.3" height="3.3" fill="#d6e5f8"/><rect x="12.5" y="4.9" width="3.3" height="3.3" fill="#d6e5f8"/><rect x="0.2" y="8.7" width="4.2" height="3.3" fill="#84d4de"/><rect x="4.9" y="8.7" width="3.3" height="3.3" fill="#d6e5f8"/><rect x="8.7" y="8.7" width="3.3" height="3.3" fill="#d6e5f8"/><rect x="12.5" y="8.7" width="3.3" height="3.3" fill="#d6e5f8"/><rect x="0.2" y="12.5" width="4.2" height="3.3" fill="#84d4de"/><rect x="4.9" y="12.5" width="3.3" height="3.3" fill="#d6e5f8"/><rect x="8.7" y="12.5" width="3.3" height="3.3" fill="#d6e5f8"/><rect x="12.5" y="12.5" width="3.3" height="3.3" fill="#d6e5f8"/></svg>
<div class="t" style="left:74px;top:623px;letter-spacing:-0.157px;word-spacing:0.157px;">mantis_project_versio...</div>
<div class="a" style="left:205px;top:622px;width:1.5px;height:18px;background:#c9c9c9;border-radius:1px"></div>
<div class="t g" style="right:1664.42px;top:623px;letter-spacing:-0.818px;word-spacing:0.818px;">1,0 KiB</div>
<div class="a" style="left:45px;top:651px;width:7px;height:1px;background:repeating-linear-gradient(90deg,#b4b4b4 0 1px,transparent 1px 2px)"></div>
<svg class="i" style="left:52px;top:643px" width="16" height="16" viewBox="0 0 16 16"><rect x="0.2" y="0.2" width="15.6" height="15.6" fill="#fbfdff"/><rect x="0.2" y="0.2" width="15.6" height="4.4" fill="#a6e2ea"/><rect x="0.2" y="0.2" width="4.4" height="15.6" fill="#a6e2ea"/><rect x="0.2" y="0.2" width="4.2" height="4.2" fill="#84d4de"/><rect x="4.9" y="0.2" width="3.3" height="4.2" fill="#84d4de"/><rect x="8.7" y="0.2" width="3.3" height="4.2" fill="#84d4de"/><rect x="12.5" y="0.2" width="3.3" height="4.2" fill="#84d4de"/><rect x="0.2" y="4.9" width="4.2" height="3.3" fill="#84d4de"/><rect x="4.9" y="4.9" width="3.3" height="3.3" fill="#d6e5f8"/><rect x="8.7" y="4.9" width="3.3" height="3.3" fill="#d6e5f8"/><rect x="12.5" y="4.9" width="3.3" height="3.3" fill="#d6e5f8"/><rect x="0.2" y="8.7" width="4.2" height="3.3" fill="#84d4de"/><rect x="4.9" y="8.7" width="3.3" height="3.3" fill="#d6e5f8"/><rect x="8.7" y="8.7" width="3.3" height="3.3" fill="#d6e5f8"/><rect x="12.5" y="8.7" width="3.3" height="3.3" fill="#d6e5f8"/><rect x="0.2" y="12.5" width="4.2" height="3.3" fill="#84d4de"/><rect x="4.9" y="12.5" width="3.3" height="3.3" fill="#d6e5f8"/><rect x="8.7" y="12.5" width="3.3" height="3.3" fill="#d6e5f8"/><rect x="12.5" y="12.5" width="3.3" height="3.3" fill="#d6e5f8"/></svg>
<div class="t" style="left:74px;top:643px;letter-spacing:-0.165px;word-spacing:0.165px;">mantis_sponsorship_t...</div>
<div class="a" style="left:205px;top:642px;width:1.5px;height:18px;background:#c9c9c9;border-radius:1px"></div>
<div class="t g" style="right:1664.42px;top:643px;letter-spacing:-0.818px;word-spacing:0.818px;">1,0 KiB</div>
<div class="a" style="left:45px;top:671px;width:7px;height:1px;background:repeating-linear-gradient(90deg,#b4b4b4 0 1px,transparent 1px 2px)"></div>
<svg class="i" style="left:52px;top:663px" width="16" height="16" viewBox="0 0 16 16"><rect x="0.2" y="0.2" width="15.6" height="15.6" fill="#fbfdff"/><rect x="0.2" y="0.2" width="15.6" height="4.4" fill="#a6e2ea"/><rect x="0.2" y="0.2" width="4.4" height="15.6" fill="#a6e2ea"/><rect x="0.2" y="0.2" width="4.2" height="4.2" fill="#84d4de"/><rect x="4.9" y="0.2" width="3.3" height="4.2" fill="#84d4de"/><rect x="8.7" y="0.2" width="3.3" height="4.2" fill="#84d4de"/><rect x="12.5" y="0.2" width="3.3" height="4.2" fill="#84d4de"/><rect x="0.2" y="4.9" width="4.2" height="3.3" fill="#84d4de"/><rect x="4.9" y="4.9" width="3.3" height="3.3" fill="#d6e5f8"/><rect x="8.7" y="4.9" width="3.3" height="3.3" fill="#d6e5f8"/><rect x="12.5" y="4.9" width="3.3" height="3.3" fill="#d6e5f8"/><rect x="0.2" y="8.7" width="4.2" height="3.3" fill="#84d4de"/><rect x="4.9" y="8.7" width="3.3" height="3.3" fill="#d6e5f8"/><rect x="8.7" y="8.7" width="3.3" height="3.3" fill="#d6e5f8"/><rect x="12.5" y="8.7" width="3.3" height="3.3" fill="#d6e5f8"/><rect x="0.2" y="12.5" width="4.2" height="3.3" fill="#84d4de"/><rect x="4.9" y="12.5" width="3.3" height="3.3" fill="#d6e5f8"/><rect x="8.7" y="12.5" width="3.3" height="3.3" fill="#d6e5f8"/><rect x="12.5" y="12.5" width="3.3" height="3.3" fill="#d6e5f8"/></svg>
<div class="t" style="left:74px;top:663px;letter-spacing:-0.14px;word-spacing:0.14px;">mantis_tag_table</div>
<div class="a" style="left:205px;top:662px;width:9.4px;height:18px;background:#e9e9e9;border:1px solid #c6c6c6;border-radius:2px"></div>
<div class="t g" style="right:1664.42px;top:663px;letter-spacing:-0.818px;word-spacing:0.818px;">6,1 KiB</div>
<div class="a" style="left:45px;top:691px;width:7px;height:1px;background:repeating-linear-gradient(90deg,#b4b4b4 0 1px,transparent 1px 2px)"></div>
<svg class="i" style="left:52px;top:683px" width="16" height="16" viewBox="0 0 16 16"><rect x="0.2" y="0.2" width="15.6" height="15.6" fill="#fbfdff"/><rect x="0.2" y="0.2" width="15.6" height="4.4" fill="#a6e2ea"/><rect x="0.2" y="0.2" width="4.4" height="15.6" fill="#a6e2ea"/><rect x="0.2" y="0.2" width="4.2" height="4.2" fill="#84d4de"/><rect x="4.9" y="0.2" width="3.3" height="4.2" fill="#84d4de"/><rect x="8.7" y="0.2" width="3.3" height="4.2" fill="#84d4de"/><rect x="12.5" y="0.2" width="3.3" height="4.2" fill="#84d4de"/><rect x="0.2" y="4.9" width="4.2" height="3.3" fill="#84d4de"/><rect x="4.9" y="4.9" width="3.3" height="3.3" fill="#d6e5f8"/><rect x="8.7" y="4.9" width="3.3" height="3.3" fill="#d6e5f8"/><rect x="12.5" y="4.9" width="3.3" height="3.3" fill="#d6e5f8"/><rect x="0.2" y="8.7" width="4.2" height="3.3" fill="#84d4de"/><rect x="4.9" y="8.7" width="3.3" height="3.3" fill="#d6e5f8"/><rect x="8.7" y="8.7" width="3.3" height="3.3" fill="#d6e5f8"/><rect x="12.5" y="8.7" width="3.3" height="3.3" fill="#d6e5f8"/><rect x="0.2" y="12.5" width="4.2" height="3.3" fill="#84d4de"/><rect x="4.9" y="12.5" width="3.3" height="3.3" fill="#d6e5f8"/><rect x="8.7" y="12.5" width="3.3" height="3.3" fill="#d6e5f8"/><rect x="12.5" y="12.5" width="3.3" height="3.3" fill="#d6e5f8"/></svg>
<div class="t" style="left:74px;top:683px;letter-spacing:-0.148px;word-spacing:0.148px;">mantis_tokens_table</div>
<div class="a" style="left:205px;top:682px;width:5.2px;height:18px;background:#e9e9e9;border:1px solid #c6c6c6;border-radius:2px"></div>
<div class="t g" style="right:1664.42px;top:683px;letter-spacing:-0.818px;word-spacing:0.818px;">3,4 KiB</div>
<div class="a" style="left:45px;top:711px;width:7px;height:1px;background:repeating-linear-gradient(90deg,#b4b4b4 0 1px,transparent 1px 2px)"></div>
<svg class="i" style="left:52px;top:703px" width="16" height="16" viewBox="0 0 16 16"><rect x="0.2" y="0.2" width="15.6" height="15.6" fill="#fbfdff"/><rect x="0.2" y="0.2" width="15.6" height="4.4" fill="#a6e2ea"/><rect x="0.2" y="0.2" width="4.4" height="15.6" fill="#a6e2ea"/><rect x="0.2" y="0.2" width="4.2" height="4.2" fill="#84d4de"/><rect x="4.9" y="0.2" width="3.3" height="4.2" fill="#84d4de"/><rect x="8.7" y="0.2" width="3.3" height="4.2" fill="#84d4de"/><rect x="12.5" y="0.2" width="3.3" height="4.2" fill="#84d4de"/><rect x="0.2" y="4.9" width="4.2" height="3.3" fill="#84d4de"/><rect x="4.9" y="4.9" width="3.3" height="3.3" fill="#d6e5f8"/><rect x="8.7" y="4.9" width="3.3" height="3.3" fill="#d6e5f8"/><rect x="12.5" y="4.9" width="3.3" height="3.3" fill="#d6e5f8"/><rect x="0.2" y="8.7" width="4.2" height="3.3" fill="#84d4de"/><rect x="4.9" y="8.7" width="3.3" height="3.3" fill="#d6e5f8"/><rect x="8.7" y="8.7" width="3.3" height="3.3" fill="#d6e5f8"/><rect x="12.5" y="8.7" width="3.3" height="3.3" fill="#d6e5f8"/><rect x="0.2" y="12.5" width="4.2" height="3.3" fill="#84d4de"/><rect x="4.9" y="12.5" width="3.3" height="3.3" fill="#d6e5f8"/><rect x="8.7" y="12.5" width="3.3" height="3.3" fill="#d6e5f8"/><rect x="12.5" y="12.5" width="3.3" height="3.3" fill="#d6e5f8"/></svg>
<div class="t" style="left:74px;top:703px;">mantis_user_pref_table</div>
<div class="a" style="left:205px;top:702px;width:3.4px;height:18px;background:#e9e9e9;border:1px solid #c6c6c6;border-radius:2px"></div>
<div class="t g" style="right:1664.42px;top:703px;letter-spacing:-0.818px;word-spacing:0.818px;">2,2 KiB</div>
<div class="a" style="left:45px;top:731px;width:7px;height:1px;background:repeating-linear-gradient(90deg,#b4b4b4 0 1px,transparent 1px 2px)"></div>
<svg class="i" style="left:52px;top:723px" width="16" height="16" viewBox="0 0 16 16"><rect x="0.2" y="0.2" width="15.6" height="15.6" fill="#fbfdff"/><rect x="0.2" y="0.2" width="15.6" height="4.4" fill="#a6e2ea"/><rect x="0.2" y="0.2" width="4.4" height="15.6" fill="#a6e2ea"/><rect x="0.2" y="0.2" width="4.2" height="4.2" fill="#84d4de"/><rect x="4.9" y="0.2" width="3.3" height="4.2" fill="#84d4de"/><rect x="8.7" y="0.2" width="3.3" height="4.2" fill="#84d4de"/><rect x="12.5" y="0.2" width="3.3" height="4.2" fill="#84d4de"/><rect x="0.2" y="4.9" width="4.2" height="3.3" fill="#84d4de"/><rect x="4.9" y="4.9" width="3.3" height="3.3" fill="#d6e5f8"/><rect x="8.7" y="4.9" width="3.3" height="3.3" fill="#d6e5f8"/><rect x="12.5" y="4.9" width="3.3" height="3.3" fill="#d6e5f8"/><rect x="0.2" y="8.7" width="4.2" height="3.3" fill="#84d4de"/><rect x="4.9" y="8.7" width="3.3" height="3.3" fill="#d6e5f8"/><rect x="8.7" y="8.7" width="3.3" height="3.3" fill="#d6e5f8"/><rect x="12.5" y="8.7" width="3.3" height="3.3" fill="#d6e5f8"/><rect x="0.2" y="12.5" width="4.2" height="3.3" fill="#84d4de"/><rect x="4.9" y="12.5" width="3.3" height="3.3" fill="#d6e5f8"/><rect x="8.7" y="12.5" width="3.3" height="3.3" fill="#d6e5f8"/><rect x="12.5" y="12.5" width="3.3" height="3.3" fill="#d6e5f8"/></svg>
<div class="t" style="left:74px;top:723px;">mantis_user_print_pre...</div>
<div class="a" style="left:205px;top:722px;width:1.5px;height:18px;background:#c9c9c9;border-radius:1px"></div>
<div class="t g" style="right:1664.42px;top:723px;letter-spacing:-0.818px;word-spacing:0.818px;">1,0 KiB</div>
<div class="a" style="left:45px;top:751px;width:7px;height:1px;background:repeating-linear-gradient(90deg,#b4b4b4 0 1px,transparent 1px 2px)"></div>
<svg class="i" style="left:52px;top:743px" width="16" height="16" viewBox="0 0 16 16"><rect x="0.2" y="0.2" width="15.6" height="15.6" fill="#fbfdff"/><rect x="0.2" y="0.2" width="15.6" height="4.4" fill="#a6e2ea"/><rect x="0.2" y="0.2" width="4.4" height="15.6" fill="#a6e2ea"/><rect x="0.2" y="0.2" width="4.2" height="4.2" fill="#84d4de"/><rect x="4.9" y="0.2" width="3.3" height="4.2" fill="#84d4de"/><rect x="8.7" y="0.2" width="3.3" height="4.2" fill="#84d4de"/><rect x="12.5" y="0.2" width="3.3" height="4.2" fill="#84d4de"/><rect x="0.2" y="4.9" width="4.2" height="3.3" fill="#84d4de"/><rect x="4.9" y="4.9" width="3.3" height="3.3" fill="#d6e5f8"/><rect x="8.7" y="4.9" width="3.3" height="3.3" fill="#d6e5f8"/><rect x="12.5" y="4.9" width="3.3" height="3.3" fill="#d6e5f8"/><rect x="0.2" y="8.7" width="4.2" height="3.3" fill="#84d4de"/><rect x="4.9" y="8.7" width="3.3" height="3.3" fill="#d6e5f8"/><rect x="8.7" y="8.7" width="3.3" height="3.3" fill="#d6e5f8"/><rect x="12.5" y="8.7" width="3.3" height="3.3" fill="#d6e5f8"/><rect x="0.2" y="12.5" width="4.2" height="3.3" fill="#84d4de"/><rect x="4.9" y="12.5" width="3.3" height="3.3" fill="#d6e5f8"/><rect x="8.7" y="12.5" width="3.3" height="3.3" fill="#d6e5f8"/><rect x="12.5" y="12.5" width="3.3" height="3.3" fill="#d6e5f8"/></svg>
<div class="t" style="left:74px;top:743px;letter-spacing:-0.225px;word-spacing:0.225px;">mantis_user_profile_ta...</div>
<div class="a" style="left:205px;top:742px;width:1.5px;height:18px;background:#c9c9c9;border-radius:1px"></div>
<div class="t g" style="right:1664.42px;top:743px;letter-spacing:-0.818px;word-spacing:0.818px;">1,0 KiB</div>
<div class="a" style="left:45px;top:771px;width:7px;height:1px;background:repeating-linear-gradient(90deg,#b4b4b4 0 1px,transparent 1px 2px)"></div>
<svg class="i" style="left:52px;top:763px" width="16" height="16" viewBox="0 0 16 16"><rect x="0.2" y="0.2" width="15.6" height="15.6" fill="#fbfdff"/><rect x="0.2" y="0.2" width="15.6" height="4.4" fill="#a6e2ea"/><rect x="0.2" y="0.2" width="4.4" height="15.6" fill="#a6e2ea"/><rect x="0.2" y="0.2" width="4.2" height="4.2" fill="#84d4de"/><rect x="4.9" y="0.2" width="3.3" height="4.2" fill="#84d4de"/><rect x="8.7" y="0.2" width="3.3" height="4.2" fill="#84d4de"/><rect x="12.5" y="0.2" width="3.3" height="4.2" fill="#84d4de"/><rect x="0.2" y="4.9" width="4.2" height="3.3" fill="#84d4de"/><rect x="4.9" y="4.9" width="3.3" height="3.3" fill="#d6e5f8"/><rect x="8.7" y="4.9" width="3.3" height="3.3" fill="#d6e5f8"/><rect x="12.5" y="4.9" width="3.3" height="3.3" fill="#d6e5f8"/><rect x="0.2" y="8.7" width="4.2" height="3.3" fill="#84d4de"/><rect x="4.9" y="8.7" width="3.3" height="3.3" fill="#d6e5f8"/><rect x="8.7" y="8.7" width="3.3" height="3.3" fill="#d6e5f8"/><rect x="12.5" y="8.7" width="3.3" height="3.3" fill="#d6e5f8"/><rect x="0.2" y="12.5" width="4.2" height="3.3" fill="#84d4de"/><rect x="4.9" y="12.5" width="3.3" height="3.3" fill="#d6e5f8"/><rect x="8.7" y="12.5" width="3.3" height="3.3" fill="#d6e5f8"/><rect x="12.5" y="12.5" width="3.3" height="3.3" fill="#d6e5f8"/></svg>
<div class="t" style="left:74px;top:763px;letter-spacing:-0.241px;word-spacing:0.241px;">mantis_user_table</div>
<div class="a" style="left:205px;top:762px;width:22.7px;height:18px;background:#e9e9e9;border:1px solid #c6c6c6;border-radius:2px"></div>
<div class="t g" style="right:1664.24px;top:763px;letter-spacing:-0.644px;word-spacing:0.644px;">14,7 KiB</div>
<svg class="i" style="left:32px;top:786px" width="6" height="10" viewBox="0 0 6 10"><path d="M0.7 0.8L5.2 5L0.7 9.2Z" fill="#fff" stroke="#a6a6a6" stroke-width="1"/></svg>
<svg class="i" style="left:40px;top:783px" width="16" height="16" viewBox="0 0 16 16"><rect x="1" y="0.4" width="14" height="4.5" fill="#e6e0f2"/><rect x="1" y="5.7" width="14" height="4.5" fill="#e6e0f2"/><rect x="1" y="11" width="14" height="4.5" fill="#e6e0f2"/></svg>
<div class="t" style="left:62px;top:783px;letter-spacing:0.148px;word-spacing:-0.148px;">methodstools</div>
<svg class="i" style="left:19px;top:808px" width="6" height="6" viewBox="0 0 6 6"><path d="M5.6 0.4V5.6H0.4Z" fill="#404040" stroke="#262626" stroke-width="0.7"/></svg>
<svg class="i" style="left:29px;top:803px" width="16" height="16" viewBox="0 0 16 16"><path d="M0.4 0.7C3.2 0.6 6.2 2.4 8.2 5.4C9.8 7.8 10.8 10 14 11.6L12.2 12.6L14.8 14.8M0.4 0.7C1.8 3 2.3 6 2.5 8.4C2.6 9.6 2.9 10.2 3.3 10.7L4.5 8.6L5.7 11" fill="none" stroke="#86b4c4" stroke-width="0.95" stroke-linejoin="round" stroke-linecap="round"/></svg>
<div class="t g" style="left:50px;top:803px;letter-spacing:-0.269px;word-spacing:0.269px;">MT Local DB</div>
<div class="t g" style="right:1664.42px;top:803px;letter-spacing:-0.818px;word-spacing:0.818px;">1,0 KiB</div>
<svg class="i" style="left:31px;top:828px" width="6" height="6" viewBox="0 0 6 6"><path d="M5.6 0.4V5.6H0.4Z" fill="#404040" stroke="#262626" stroke-width="0.7"/></svg>
<svg class="i" style="left:40px;top:823px" width="16" height="16" viewBox="0 0 16 16"><rect x="1" y="0.4" width="14" height="4.5" fill="#d1c4e9"/><rect x="1" y="5.7" width="14" height="4.5" fill="#d1c4e9"/><rect x="1" y="11" width="14" height="4.5" fill="#d1c4e9"/><circle cx="11.2" cy="10.8" r="4.6" fill="#c8e6c9"/><path d="M8.8 10.8L10.6 12.6L13.8 9" stroke="#4caf50" stroke-width="1.2" fill="none"/></svg>
<div class="t g" style="left:62px;top:823px;letter-spacing:0.148px;word-spacing:-0.148px;">methodstools</div>
<div class="t g" style="right:1664.42px;top:823px;letter-spacing:-0.818px;word-spacing:0.818px;">1,0 KiB</div>
<div class="a" style="left:44px;top:841px;width:1px;height:30px;background:repeating-linear-gradient(180deg,#b4b4b4 0 1px,transparent 1px 2px)"></div>
<div class="a" style="left:45px;top:851px;width:7px;height:1px;background:repeating-linear-gradient(90deg,#b4b4b4 0 1px,transparent 1px 2px)"></div>
<svg class="i" style="left:52px;top:843px" width="16" height="16" viewBox="0 0 16 16"><path d="M4.6 3.6L0.8 8L4.6 12.4M11.4 3.6L15.2 8L11.4 12.4" stroke="#7e9ad6" stroke-width="1.4" fill="none"/><path d="M9.8 2.2L6.2 13.8" stroke="#7e9ad6" stroke-width="1.3"/></svg>
<div class="t g" style="left:74px;top:843px;letter-spacing:-0.183px;word-spacing:0.183px;">procedure 1</div>
<div class="a" style="left:45px;top:871px;width:7px;height:1px;background:repeating-linear-gradient(90deg,#b4b4b4 0 1px,transparent 1px 2px)"></div>
<svg class="i" style="left:52px;top:863px" width="16" height="16" viewBox="0 0 16 16"><rect x="0.2" y="0.2" width="15.6" height="15.6" fill="#f6faff"/><rect x="0.2" y="0.2" width="15.6" height="4.4" fill="#33bfd0"/><rect x="0.2" y="0.2" width="4.4" height="15.6" fill="#33bfd0"/><rect x="0.2" y="0.2" width="4.2" height="4.2" fill="#00acc1"/><rect x="4.9" y="0.2" width="3.3" height="4.2" fill="#00acc1"/><rect x="8.7" y="0.2" width="3.3" height="4.2" fill="#00acc1"/><rect x="12.5" y="0.2" width="3.3" height="4.2" fill="#00acc1"/><rect x="0.2" y="4.9" width="4.2" height="3.3" fill="#00acc1"/><rect x="4.9" y="4.9" width="3.3" height="3.3" fill="#cadff8"/><rect x="8.7" y="4.9" width="3.3" height="3.3" fill="#cadff8"/><rect x="12.5" y="4.9" width="3.3" height="3.3" fill="#cadff8"/><rect x="0.2" y="8.7" width="4.2" height="3.3" fill="#00acc1"/><rect x="4.9" y="8.7" width="3.3" height="3.3" fill="#cadff8"/><rect x="8.7" y="8.7" width="3.3" height="3.3" fill="#cadff8"/><rect x="12.5" y="8.7" width="3.3" height="3.3" fill="#cadff8"/><rect x="0.2" y="12.5" width="4.2" height="3.3" fill="#00acc1"/><rect x="4.9" y="12.5" width="3.3" height="3.3" fill="#cadff8"/><rect x="8.7" y="12.5" width="3.3" height="3.3" fill="#cadff8"/><rect x="12.5" y="12.5" width="3.3" height="3.3" fill="#cadff8"/></svg>
<div class="t g" style="left:74px;top:863px;letter-spacing:-0.075px;word-spacing:0.075px;">test table</div>
<div class="a" style="left:205px;top:862px;width:70px;height:18px;background:#e9e9e9;border:1px solid #c6c6c6;border-radius:2px"></div>
<div class="t g" style="right:1664.42px;top:863px;letter-spacing:-0.818px;word-spacing:0.818px;">1,0 KiB</div>
<div class="a" style="left:282px;top:99px;width:1644px;height:819px;background:#fff;border:1px solid #a0a0a0"></div>
<div class="a" style="left:284px;top:79px;width:110px;height:20px;background:linear-gradient(#f2f2f2,#ebebeb);border:1px solid #ababab;border-bottom:0"></div><svg class="i" style="left:290px;top:81px" width="16" height="16" viewBox="0 0 16 16"><rect x="3.6" y="0.2" width="9" height="15.4" rx="0.6" fill="#2196f3"/><rect x="3.6" y="0.2" width="9" height="10.6" fill="#1f4e79"/><path d="M4.6 2h7M4.6 4.4h7M4.6 6.8h7M4.6 9.2h7" stroke="#3a78b0" stroke-width="1.1"/><rect x="7.4" y="13" width="1.6" height="1.2" fill="#e3f2fd"/></svg><div class="t" style="left:312px;top:82px;letter-spacing:-0.445px;word-spacing:0.445px;">Host: 127.0.0.1</div>
<div class="a" style="left:394.5px;top:79px;width:144.0px;height:20px;background:linear-gradient(#f2f2f2,#ebebeb);border:1px solid #ababab;border-bottom:0"></div><svg class="i" style="left:400px;top:81px" width="16" height="16" viewBox="0 0 16 16"><rect x="1" y="0.4" width="14" height="4.5" fill="#d1c4e9"/><rect x="1" y="5.7" width="14" height="4.5" fill="#d1c4e9"/><rect x="1" y="11" width="14" height="4.5" fill="#d1c4e9"/></svg><div class="t" style="left:422.5px;top:82px;letter-spacing:-0.185px;word-spacing:0.185px;">Database: bugtracker</div>
<div class="a" style="left:539.5px;top:79px;width:191.5px;height:20px;background:linear-gradient(#f2f2f2,#ebebeb);border:1px solid #ababab;border-bottom:0"></div><svg class="i" style="left:545px;top:81px" width="16" height="16" viewBox="0 0 16 16"><rect x="0.2" y="0.2" width="15.6" height="15.6" fill="#f6faff"/><rect x="0.2" y="0.2" width="15.6" height="4.4" fill="#33bfd0"/><rect x="0.2" y="0.2" width="4.4" height="15.6" fill="#33bfd0"/><rect x="0.2" y="0.2" width="4.2" height="4.2" fill="#00acc1"/><rect x="4.9" y="0.2" width="3.3" height="4.2" fill="#00acc1"/><rect x="8.7" y="0.2" width="3.3" height="4.2" fill="#00acc1"/><rect x="12.5" y="0.2" width="3.3" height="4.2" fill="#00acc1"/><rect x="0.2" y="4.9" width="4.2" height="3.3" fill="#00acc1"/><rect x="4.9" y="4.9" width="3.3" height="3.3" fill="#cadff8"/><rect x="8.7" y="4.9" width="3.3" height="3.3" fill="#cadff8"/><rect x="12.5" y="4.9" width="3.3" height="3.3" fill="#cadff8"/><rect x="0.2" y="8.7" width="4.2" height="3.3" fill="#00acc1"/><rect x="4.9" y="8.7" width="3.3" height="3.3" fill="#cadff8"/><rect x="8.7" y="8.7" width="3.3" height="3.3" fill="#cadff8"/><rect x="12.5" y="8.7" width="3.3" height="3.3" fill="#cadff8"/><rect x="0.2" y="12.5" width="4.2" height="3.3" fill="#00acc1"/><rect x="4.9" y="12.5" width="3.3" height="3.3" fill="#cadff8"/><rect x="8.7" y="12.5" width="3.3" height="3.3" fill="#cadff8"/><rect x="12.5" y="12.5" width="3.3" height="3.3" fill="#cadff8"/></svg><div class="t" style="left:568px;top:82px;letter-spacing:-0.149px;word-spacing:0.149px;">Table: mantis_api_token_table</div>
<div class="a" style="left:731.5px;top:79px;width:56.5px;height:20px;background:linear-gradient(#f2f2f2,#ebebeb);border:1px solid #ababab;border-bottom:0"></div><svg class="i" style="left:737px;top:81px" width="16" height="16" viewBox="0 0 16 16"><rect x="0.9" y="0.9" width="14.2" height="14.2" rx="1.8" fill="#e8f4fe" stroke="#64b5f6" stroke-width="1.8"/><path d="M0.7 5.6H15.3M0.7 10.4H15.3M5.6 0.7V15.3M10.4 0.7V15.3" stroke="#64b5f6" stroke-width="1.2"/></svg><div class="t" style="left:759.5px;top:82px;letter-spacing:-0.449px;word-spacing:0.449px;">Data</div>
<div class="a" style="left:787px;top:77px;width:75px;height:22px;background:#fff;border:1px solid #ababab;border-bottom:0"></div><div class="a" style="left:788px;top:99px;width:73px;height:1px;background:#fff"></div><svg class="i" style="left:795px;top:79px" width="16" height="16" viewBox="0 0 16 16"><path d="M0.2 0.5L15 8L0.2 15.6Z" fill="#2196f3"/></svg><div class="t" style="left:817.5px;top:80px;letter-spacing:-0.03px;word-spacing:0.03px;">Query*</div>
<svg class="i" style="left:866px;top:80px" width="16" height="16" viewBox="0 0 16 16"><rect x="0.6" y="0.6" width="12.8" height="12.8" fill="#fafafa" stroke="#90caf9" stroke-width="1.1"/><path d="M2.6 3.4h7M2.6 5.8h9M2.6 8.2h9M2.6 10.6h5" stroke="#b0bec5" stroke-width="1"/><circle cx="12.2" cy="12.2" r="3.6" fill="#4caf50"/><path d="M12.2 10.2V14.2M10.2 12.2H14.2" stroke="#fff" stroke-width="1.2"/></svg>
<div class="a" style="left:286px;top:103px;width:1018px;height:311px;background:#fff;border:1px solid #a0a0a0"></div>
<div class="a" style="left:288px;top:105px;width:47px;height:308px;background:#f0f0f0"></div>
<div class="a" style="left:336px;top:105px;width:1px;height:308px;background:#f4f4f4"></div>
<div class="t mono ln" style="right:1618px;top:106px">1</div>
<div class="t mono" style="left:339px;top:106px"><span class="kw">SELECT</span> <span class="sy">*</span> <span class="kw">FROM</span> <span class="id">mantis_api_token_table</span> <span class="kw">WHERE</span> <span class="id">id</span> <span class="sy">=</span> <span class="nu">2</span></div>
<div class="a" style="left:681.5px;top:106px;width:2px;height:12px;background:#000"></div>
<div class="a" style="left:1304px;top:103px;width:4px;height:311px;background:#f0f0f0"></div>
<div class="a" style="left:1308px;top:103px;width:616px;height:311px;background:#fff;border:1px solid #a0a0a0"></div>
<div class="a" style="left:1309px;top:125px;width:614px;height:2px;background:#a8a8a8"></div>
<svg class="i" style="left:1311px;top:106px" width="14" height="14" viewBox="0 0 16 16"><path d="M10.4 10.4L15.4 15.4" stroke="#424242" stroke-width="2"/><circle cx="6.3" cy="6.4" r="5.4" fill="#64b5f6" stroke="#455a64" stroke-width="1.4"/><path d="M4.2 4.6A2.8 2.8 0 0 1 8.4 4.6" stroke="#bbdefb" stroke-width="0.9" fill="none"/></svg>
<div class="t g" style="left:1329px;top:106px;letter-spacing:-0.225px;word-spacing:0.225px;">Filter ...</div>
<svg class="i" style="left:1322px;top:135px" width="6" height="6" viewBox="0 0 6 6"><path d="M5.6 0.4V5.6H0.4Z" fill="#404040" stroke="#262626" stroke-width="0.7"/></svg>
<svg class="i" style="left:1334px;top:130px" width="16" height="16" viewBox="0 0 16 16"><rect x="0.2" y="0.2" width="15.6" height="15.6" fill="#f6faff"/><rect x="0.2" y="0.2" width="15.6" height="4.4" fill="#33bfd0"/><rect x="0.2" y="0.2" width="4.4" height="15.6" fill="#33bfd0"/><rect x="0.2" y="0.2" width="4.2" height="4.2" fill="#00acc1"/><rect x="4.9" y="0.2" width="3.3" height="4.2" fill="#00acc1"/><rect x="8.7" y="0.2" width="3.3" height="4.2" fill="#00acc1"/><rect x="12.5" y="0.2" width="3.3" height="4.2" fill="#00acc1"/><rect x="0.2" y="4.9" width="4.2" height="3.3" fill="#00acc1"/><rect x="4.9" y="4.9" width="3.3" height="3.3" fill="#cadff8"/><rect x="8.7" y="4.9" width="3.3" height="3.3" fill="#cadff8"/><rect x="12.5" y="4.9" width="3.3" height="3.3" fill="#cadff8"/><rect x="0.2" y="8.7" width="4.2" height="3.3" fill="#00acc1"/><rect x="4.9" y="8.7" width="3.3" height="3.3" fill="#cadff8"/><rect x="8.7" y="8.7" width="3.3" height="3.3" fill="#cadff8"/><rect x="12.5" y="8.7" width="3.3" height="3.3" fill="#cadff8"/><rect x="0.2" y="12.5" width="4.2" height="3.3" fill="#00acc1"/><rect x="4.9" y="12.5" width="3.3" height="3.3" fill="#cadff8"/><rect x="8.7" y="12.5" width="3.3" height="3.3" fill="#cadff8"/><rect x="12.5" y="12.5" width="3.3" height="3.3" fill="#cadff8"/></svg>
<div class="t" style="left:1356px;top:130px;letter-spacing:-0.074px;word-spacing:0.074px;">Columns in mantis_api_token_table</div>
<svg class="i" style="left:1352px;top:150px" width="16" height="16" viewBox="0 0 16 16"><path d="M8 1.2L14.8 8L8 14.8L1.2 8Z" fill="#fff" stroke="#26a6b5" stroke-width="1.4"/></svg>
<div class="t" style="left:1374px;top:150px;letter-spacing:0.86px;word-spacing:-0.86px;">id</div>
<div class="t" style="left:1710px;top:150px;letter-spacing:-0.065px;word-spacing:0.065px;color:#0000a0">INT</div>
<svg class="i" style="left:1352px;top:170px" width="16" height="16" viewBox="0 0 16 16"><path d="M8 1.2L14.8 8L8 14.8L1.2 8Z" fill="#fff" stroke="#26a6b5" stroke-width="1.4"/></svg>
<div class="t" style="left:1374px;top:170px;letter-spacing:-0.376px;word-spacing:0.376px;">user_id</div>
<div class="t" style="left:1710px;top:170px;letter-spacing:-0.065px;word-spacing:0.065px;color:#0000a0">INT</div>
<svg class="i" style="left:1352px;top:190px" width="16" height="16" viewBox="0 0 16 16"><path d="M8 1.2L14.8 8L8 14.8L1.2 8Z" fill="#fff" stroke="#26a6b5" stroke-width="1.4"/></svg>
<div class="t" style="left:1374px;top:190px;letter-spacing:0.227px;word-spacing:-0.227px;">name</div>
<div class="t" style="left:1710px;top:190px;letter-spacing:-0.498px;word-spacing:0.498px;color:#2e7d1e">VARCHAR</div>
<svg class="i" style="left:1352px;top:210px" width="16" height="16" viewBox="0 0 16 16"><path d="M8 1.2L14.8 8L8 14.8L1.2 8Z" fill="#fff" stroke="#26a6b5" stroke-width="1.4"/></svg>
<div class="t" style="left:1374px;top:210px;letter-spacing:-0.307px;word-spacing:0.307px;">hash</div>
<div class="t" style="left:1710px;top:210px;letter-spacing:-0.498px;word-spacing:0.498px;color:#2e7d1e">VARCHAR</div>
<svg class="i" style="left:1352px;top:230px" width="16" height="16" viewBox="0 0 16 16"><path d="M8 1.2L14.8 8L8 14.8L1.2 8Z" fill="#fff" stroke="#26a6b5" stroke-width="1.4"/></svg>
<div class="t" style="left:1374px;top:230px;letter-spacing:-0.278px;word-spacing:0.278px;">date_created</div>
<div class="t" style="left:1710px;top:230px;letter-spacing:-0.065px;word-spacing:0.065px;color:#0000a0">INT</div>
<svg class="i" style="left:1352px;top:250px" width="16" height="16" viewBox="0 0 16 16"><path d="M8 1.2L14.8 8L8 14.8L1.2 8Z" fill="#fff" stroke="#26a6b5" stroke-width="1.4"/></svg>
<div class="t" style="left:1374px;top:250px;letter-spacing:-0.356px;word-spacing:0.356px;">date_used</div>
<div class="t" style="left:1710px;top:250px;letter-spacing:-0.065px;word-spacing:0.065px;color:#0000a0">INT</div>
<div class="a" style="left:1310px;top:268px;width:595px;height:20px;background:#f7f7f7;border:1px solid #e2e2e2"></div>
<svg class="i" style="left:1322px;top:275px" width="6" height="6" viewBox="0 0 6 6"><path d="M5.6 0.4V5.6H0.4Z" fill="#404040" stroke="#262626" stroke-width="0.7"/></svg>
<svg class="i" style="left:1334px;top:270px" width="16" height="16" viewBox="0 0 16 16"><path d="M6.4 0.6H11L8.6 6H12L5.6 15.4L7.2 8.6H4Z" fill="#d500f9"/></svg>
<div class="t" style="left:1356px;top:270px;letter-spacing:-0.07px;word-spacing:0.07px;">SQL functions</div>
<svg class="i" style="left:1352px;top:290px" width="16" height="16" viewBox="0 0 16 16"><path d="M6.4 0.6H11L8.6 6H12L5.6 15.4L7.2 8.6H4Z" fill="#d500f9"/></svg>
<div class="t" style="left:1374px;top:290px;letter-spacing:-0.638px;word-spacing:0.638px;">BIT_COUNT</div>
<div class="t" style="left:1710px;top:290px;letter-spacing:-0.029px;word-spacing:0.029px;">(N)</div>
<svg class="i" style="left:1352px;top:310px" width="16" height="16" viewBox="0 0 16 16"><path d="M6.4 0.6H11L8.6 6H12L5.6 15.4L7.2 8.6H4Z" fill="#d500f9"/></svg>
<div class="t" style="left:1374px;top:310px;letter-spacing:-0.9px;word-spacing:0.9px;">COALESCE</div>
<div class="t" style="left:1710px;top:310px;letter-spacing:-0.222px;word-spacing:0.222px;">(value,...)</div>
<svg class="i" style="left:1352px;top:330px" width="16" height="16" viewBox="0 0 16 16"><path d="M6.4 0.6H11L8.6 6H12L5.6 15.4L7.2 8.6H4Z" fill="#d500f9"/></svg>
<div class="t" style="left:1374px;top:330px;letter-spacing:-0.9px;word-spacing:0.9px;">GREATEST</div>
<div class="t" style="left:1710px;top:330px;letter-spacing:-0.255px;word-spacing:0.255px;">(value1,value2,...)</div>
<svg class="i" style="left:1352px;top:350px" width="16" height="16" viewBox="0 0 16 16"><path d="M6.4 0.6H11L8.6 6H12L5.6 15.4L7.2 8.6H4Z" fill="#d500f9"/></svg>
<div class="t" style="left:1374px;top:350px;letter-spacing:-0.611px;word-spacing:0.611px;">INTERVAL</div>
<div class="t" style="left:1710px;top:350px;letter-spacing:-0.221px;word-spacing:0.221px;">(N,N1,N2,N3,...)</div>
<svg class="i" style="left:1352px;top:370px" width="16" height="16" viewBox="0 0 16 16"><path d="M6.4 0.6H11L8.6 6H12L5.6 15.4L7.2 8.6H4Z" fill="#d500f9"/></svg>
<div class="t" style="left:1374px;top:370px;letter-spacing:-0.824px;word-spacing:0.824px;">ISNULL</div>
<div class="t" style="left:1710px;top:370px;letter-spacing:-0.307px;word-spacing:0.307px;">(expr)</div>
<svg class="i" style="left:1352px;top:390px" width="16" height="16" viewBox="0 0 16 16"><path d="M6.4 0.6H11L8.6 6H12L5.6 15.4L7.2 8.6H4Z" fill="#d500f9"/></svg>
<div class="t" style="left:1374px;top:390px;letter-spacing:-0.9px;word-spacing:0.9px;">LEAST</div>
<div class="t" style="left:1710px;top:390px;letter-spacing:-0.255px;word-spacing:0.255px;">(value1,value2,...)</div>
<div class="a" style="left:1356px;top:411px;width:6px;height:2px;background:#e040fb"></div>
<div class="a" style="left:1906px;top:128px;width:16px;height:285px;background:#f0f0f0"></div><div class="a" style="left:1906px;top:145px;width:15px;height:17px;background:#cdcdcd"></div><svg class="i" style="left:1909.5px;top:134.0px" width="8" height="7" viewBox="0 0 8 7"><path d="M0.7 5.6L4 2.2L7.3 5.6" stroke="#5a5a5a" stroke-width="2" fill="none"/></svg><svg class="i" style="left:1909.5px;top:400.5px" width="8" height="7" viewBox="0 0 8 7"><path d="M0.7 1.4L4 4.8L7.3 1.4" stroke="#5a5a5a" stroke-width="2" fill="none"/></svg>
<div class="a" style="left:286px;top:414px;width:1640px;height:27px;background:#f0f0f0"></div>
<div class="a" style="left:286px;top:441px;width:1640px;height:1px;background:#a0a0a0"></div>
<div class="a" style="left:279px;top:918px;width:1649px;height:31px;background:#f0f0f0"></div>
<svg class="i" style="left:290px;top:927px" width="10" height="10" viewBox="0 0 10 10"><path d="M1 1L9 9M9 1L1 9" stroke="#1a1a1a" stroke-width="1.5" fill="none"/></svg>
<div class="t" style="left:318px;top:925px;letter-spacing:-0.133px;word-spacing:0.133px;">Filter:</div>
<div class="a" style="left:352px;top:922px;width:154px;height:23px;background:#fff;border:1px solid #ababab"></div>
<div class="t g" style="left:355px;top:925px;letter-spacing:-0.356px;word-spacing:0.356px;">Regular expression</div>
<div class="a" style="left:8px;top:949px;width:1920px;height:80px;background:#fff;border:1px solid #a0a0a0"></div>
<div class="a" style="left:10px;top:951px;width:47px;height:76px;background:#f0f0f0"></div>
<div class="a" style="left:57px;top:951px;width:1px;height:76px;background:#e6e6e6"></div>
<div class="a" style="left:58px;top:950px;width:1852px;height:78px;overflow:hidden">
<div class="t mono" style="left:3px;top:2px"><span class="kw">SHOW COLLATION</span><span class="sy">;</span></div>
<div class="t mono" style="left:3px;top:16px"><span class="kw">SHOW CREATE TABLE</span> <span class="id">`bugtracker`</span><span class="sy">.</span><span class="id">`mantis_api_token_table`</span><span class="sy">;</span></div>
<div class="t mono" style="left:3px;top:30px"><span class="cm">/* Entering session "Mantis Local DB Server" */</span></div>
<div class="t mono" style="left:3px;top:44px"><span class="kw">SHOW CREATE TABLE</span> <span class="id">`bugtracker`</span><span class="sy">.</span><span class="id">`mantis_api_token_table`</span><span class="sy">;</span><span class="kw">SHOW CREATE TABLE</span> <span class="id">`bugtracker`</span><span class="sy">.</span><span class="id">`mantis_bugnote_table`</span><span class="sy">;</span><span class="kw">SHOW CREATE TABLE</span> <span class="id">`bugtracker`</span><span class="sy">.</span><span class="id">`mantis_bugnote_text_table`</span><span class="sy">;</span><span class="kw">SHOW CREATE TABLE</span> <span class="id">`bugtracker`</span><span class="sy">.</span><span class="id">`mantis_bug_file_table`</span><span class="sy">;</span><span class="kw">SHOW CREATE TABLE</span> <span class="id">`bugtracker`</span><span class="sy">.</span><span class="id">`mantis_bug_history_table`</span><span class="sy">;</span><span class="kw">SHOW CREATE TABLE</span> <span class="id">`bugtracker`</span><span class="sy">.</span><span class="id">`mantis_bug_monitor_table`</span><span class="sy">;</span></div>
<div class="t mono" style="left:3px;top:58px"><span class="kw">SHOW CREATE TABLE</span> <span class="id">`bugtracker`</span><span class="sy">.</span><span class="id">`mantis_api_token_table`</span><span class="sy">;</span><span class="kw">SHOW CREATE TABLE</span> <span class="id">`bugtracker`</span><span class="sy">.</span><span class="id">`mantis_bugnote_table`</span><span class="sy">;</span><span class="kw">SHOW CREATE TABLE</span> <span class="id">`bugtracker`</span><span class="sy">.</span><span class="id">`mantis_bugnote_text_table`</span><span class="sy">;</span><span class="kw">SHOW CREATE TABLE</span> <span class="id">`bugtracker`</span><span class="sy">.</span><span class="id">`mantis_bug_file_table`</span><span class="sy">;</span><span class="kw">SHOW CREATE TABLE</span> <span class="id">`bugtracker`</span><span class="sy">.</span><span class="id">`mantis_bug_history_table`</span><span class="sy">;</span><span class="kw">SHOW CREATE TABLE</span> <span class="id">`bugtracker`</span><span class="sy">.</span><span class="id">`mantis_bug_monitor_table`</span><span class="sy">;</span></div>
</div>
<div class="t mono ln" style="right:1896.5px;top:952px">97</div>
<div class="t mono ln" style="right:1896.5px;top:966px">98</div>
<div class="t mono ln" style="right:1896.5px;top:980px">99</div>
<div class="t mono ln" style="right:1896.5px;top:994px">100</div>
<div class="t mono ln" style="right:1896.5px;top:1008px">101</div>
<div class="a" style="left:1910px;top:951px;width:16px;height:76px;background:#f0f0f0"></div><div class="a" style="left:1910px;top:993px;width:15px;height:17px;background:#cdcdcd"></div><svg class="i" style="left:1913.5px;top:956.5px" width="8" height="7" viewBox="0 0 8 7"><path d="M0.7 5.6L4 2.2L7.3 5.6" stroke="#5a5a5a" stroke-width="2" fill="none"/></svg><svg class="i" style="left:1913.5px;top:1015.1px" width="8" height="7" viewBox="0 0 8 7"><path d="M0.7 1.4L4 4.8L7.3 1.4" stroke="#5a5a5a" stroke-width="2" fill="none"/></svg>
<div class="a" style="left:8px;top:1029px;width:1920px;height:19px;background:#f0f0f0"></div>
<div class="a" style="left:709px;top:1031px;width:1px;height:16px;background:#d7d7d7"></div>
<div class="a" style="left:819px;top:1031px;width:1px;height:16px;background:#d7d7d7"></div>
<div class="a" style="left:1013px;top:1031px;width:1px;height:16px;background:#d7d7d7"></div>
<div class="a" style="left:1213px;top:1031px;width:1px;height:16px;background:#d7d7d7"></div>
<div class="a" style="left:1433px;top:1031px;width:1px;height:16px;background:#d7d7d7"></div>
<div class="a" style="left:1627px;top:1031px;width:1px;height:16px;background:#d7d7d7"></div>
<div class="t" style="left:714px;top:1032px;letter-spacing:-0.583px;word-spacing:0.583px;">r1 : c50 (49 B)</div>
<svg class="i" style="left:823px;top:1031px" width="16" height="16" viewBox="0 0 16 16"><circle cx="8" cy="8" r="6.9" fill="#fff" stroke="#00acc1" stroke-width="1.9"/><path d="M8 3.8V8.3L10.6 10.8" stroke="#37474f" stroke-width="1.5" fill="none"/></svg>
<div class="t" style="left:841.5px;top:1032px;letter-spacing:-0.277px;word-spacing:0.277px;">Connected: 01:48 h</div>
<svg class="i" style="left:1018px;top:1032px" width="15" height="15" viewBox="0 0 16 16"><path d="M0.4 0.7C3.2 0.6 6.2 2.4 8.2 5.4C9.8 7.8 10.8 10 14 11.6L12.2 12.6L14.8 14.8M0.4 0.7C1.8 3 2.3 6 2.5 8.4C2.6 9.6 2.9 10.2 3.3 10.7L4.5 8.6L5.7 11" fill="none" stroke="#86b4c4" stroke-width="0.95" stroke-linejoin="round" stroke-linecap="round"/></svg>
<div class="t" style="left:1035.5px;top:1032px;letter-spacing:-0.551px;word-spacing:0.551px;">MySQL 5.7.26</div>
<div class="t" style="left:1218.5px;top:1032px;letter-spacing:-0.226px;word-spacing:0.226px;">Uptime: 01:51 h</div>
<svg class="i" style="left:1437px;top:1031px" width="16" height="16" viewBox="0 0 16 16"><circle cx="8" cy="8" r="6.9" fill="#fff" stroke="#00acc1" stroke-width="1.9"/><path d="M8 3.8V8.3L10.6 10.8" stroke="#37474f" stroke-width="1.5" fill="none"/></svg>
<div class="t" style="left:1455px;top:1032px;letter-spacing:-0.304px;word-spacing:0.304px;">Server time: 11:17</div>
<svg class="i" style="left:1631px;top:1032px" width="15" height="15" viewBox="0 0 16 16"><circle cx="8" cy="8" r="6.8" fill="#fdfdfd" stroke="#9c27b0" stroke-width="1.4"/></svg>
<div class="t" style="left:1649.5px;top:1032px;letter-spacing:-0.145px;word-spacing:0.145px;">Idle.</div>
<div class="a" style="left:733px;top:176px;width:309px;height:514px;background:#f0f0f0;border:1px solid #979797;box-shadow:3px 3px 3px rgba(0,0,0,0.45)"></div>
<div class="a" style="left:763px;top:179px;width:1px;height:508px;background:#e0e0e0"></div>
<div class="a" style="left:764px;top:179px;width:1px;height:508px;background:#fff"></div>
<svg class="i" style="left:739px;top:182px" width="16" height="16" viewBox="0 0 16 16"><path d="M0.2 0.5L15 8L0.2 15.6Z" fill="#2196f3"/></svg>
<div class="t" style="left:767px;top:182px;letter-spacing:-0.257px;word-spacing:0.257px;">Run</div>
<div class="t" style="right:918.2px;top:182px;letter-spacing:-0.9px;word-spacing:0.9px;">F9</div>
<svg class="i" style="left:739px;top:204px" width="16" height="16" viewBox="0 0 16 16"><rect x="0" y="1.6" width="5" height="1.3" fill="#d0d0d0"/><rect x="0" y="3.8000000000000003" width="5" height="1.3" fill="#b0b0b0"/><rect x="0" y="6.0" width="5" height="1.3" fill="#bcbcbc"/><rect x="0" y="8.200000000000001" width="5" height="1.3" fill="#b0b0b0"/><rect x="0" y="10.4" width="5" height="1.3" fill="#c8c8c8"/><rect x="0" y="12.6" width="5" height="1.3" fill="#d4d4d4"/><path d="M6.2 1.3L15.4 8L6.2 14.8Z" fill="#c6c6c6"/></svg>
<div class="t d" style="left:767px;top:204px;letter-spacing:-0.21px;word-spacing:0.21px;">Run Selection</div>
<div class="t d" style="right:917.36px;top:204px;letter-spacing:-0.062px;word-spacing:0.062px;">Ctrl+F9</div>
<svg class="i" style="left:739px;top:226px" width="16" height="16" viewBox="0 0 16 16"><rect x="0" y="1.6" width="5" height="1.3" fill="#bdbdbd"/><rect x="0" y="3.8000000000000003" width="5" height="1.3" fill="#9e9e9e"/><rect x="0" y="6.0" width="5" height="1.3" fill="#e57373"/><rect x="0" y="8.200000000000001" width="5" height="1.3" fill="#e57373"/><rect x="0" y="10.4" width="5" height="1.3" fill="#9e9e9e"/><rect x="0" y="12.6" width="5" height="1.3" fill="#bdbdbd"/><path d="M6.2 1.3L15.4 8L6.2 14.8Z" fill="#2196f3"/></svg>
<div class="t" style="left:767px;top:226px;letter-spacing:-0.018px;word-spacing:0.018px;">Run current query</div>
<div class="t" style="right:917.22px;top:226px;letter-spacing:0.084px;word-spacing:-0.084px;">Shift+Ctrl+F9</div>
<div class="t" style="left:767px;top:248px;letter-spacing:-0.31px;word-spacing:0.31px;">Explain</div>
<svg class="i" style="left:1027px;top:252px" width="5" height="8" viewBox="0 0 5 8"><path d="M0.5 0.3L4.6 4L0.5 7.7Z" fill="#111"/></svg>
<div class="a" style="left:765px;top:269px;width:274px;height:1px;background:#d7d7d7"></div>
<div class="a" style="left:765px;top:270px;width:274px;height:1px;background:#fff"></div>
<svg class="i" style="left:739px;top:276px" width="16" height="16" viewBox="0 0 16 16"><circle cx="2.9" cy="3.2" r="2" fill="none" stroke="#0097a7" stroke-width="1.3"/><circle cx="2.9" cy="12.6" r="2" fill="none" stroke="#0097a7" stroke-width="1.3"/><path d="M4.4 4.6L15.2 12.4M4.4 11.2L15.2 3.4" stroke="#1a9fb0" stroke-width="1.7" fill="none"/></svg>
<div class="t" style="left:767px;top:276px;letter-spacing:0.513px;word-spacing:-0.513px;">Cut</div>
<div class="t" style="right:917.16px;top:276px;letter-spacing:0.145px;word-spacing:-0.145px;">Ctrl+X</div>
<svg class="i" style="left:739px;top:298px" width="16" height="16" viewBox="0 0 16 16"><path d="M0.1 0H6.8L8 1.5V12.9H0.1Z" fill="#42a5f5"/><path d="M1.8 4.8h2.2v1.4h-2.2zM1.8 7.4h2.2v1.4h-2.2zM1.8 10h2.2v1.4h-2.2z" fill="#1e88e5"/><path d="M4.4 3.2H8.6L13.9 7.6V15.8H4.4Z" fill="#90caf9"/><path d="M6.8 0.3L13.9 6.4V7.8H6.8Z" fill="#bbdefb"/><path d="M6.8 0.3L13.9 6.4H8.4Z" fill="#cfe6fb"/><path d="M6.4 8.6h5.8M6.4 11.2h5.8M6.4 13.6h4.2" stroke="#42a5f5" stroke-width="1.2"/></svg>
<div class="t" style="left:767px;top:298px;letter-spacing:0.229px;word-spacing:-0.229px;">Copy</div>
<div class="t" style="right:917.11px;top:298px;letter-spacing:0.193px;word-spacing:-0.193px;">Ctrl+C</div>
<svg class="i" style="left:739px;top:320px" width="16" height="16" viewBox="0 0 16 16"><rect x="0.7" y="1.9" width="8.9" height="12.4" rx="1.3" fill="#fff" stroke="#546e7a" stroke-width="1.3"/><rect x="3.2" y="0.3" width="4" height="2.3" rx="0.8" fill="#90a4ae"/><rect x="4.4" y="5.8" width="7.6" height="9.9" fill="#90caf9"/><path d="M5.6 8.4h5.6M5.6 10.6h5.6M5.6 12.8h4" stroke="#42a5f5" stroke-width="1.2"/></svg>
<div class="t" style="left:767px;top:320px;letter-spacing:-0.446px;word-spacing:0.446px;">Paste</div>
<div class="t" style="right:917.16px;top:320px;letter-spacing:0.145px;word-spacing:-0.145px;">Ctrl+V</div>
<svg class="i" style="left:739px;top:342px" width="16" height="16" viewBox="0 0 16 16"><rect x="0.6" y="0.6" width="14.8" height="14.8" fill="none" stroke="#b0bec5" stroke-width="1.2" stroke-dasharray="2 1.4"/><path d="M3.2 4.4h9.6M3.2 6.8h9.6M3.2 9.2h9.6M3.2 11.6h9.6" stroke="#64b5f6" stroke-width="1.2"/></svg>
<div class="t" style="left:767px;top:342px;letter-spacing:-0.274px;word-spacing:0.274px;">Select all</div>
<div class="t" style="right:916.98px;top:342px;letter-spacing:0.325px;word-spacing:-0.325px;">Ctrl+A</div>
<svg class="i" style="left:739px;top:364px" width="16" height="16" viewBox="0 0 16 16"><rect x="0.2" y="4.6" width="10" height="6.6" fill="#90caf9"/><path d="M11.5 1.2V14.8M9 1.2H10.4C11.2 1.2 11.5 1.6 11.5 2.2C11.5 1.6 11.8 1.2 12.6 1.2H14M9 14.8H10.4C11.2 14.8 11.5 14.4 11.5 13.8C11.5 14.4 11.8 14.8 12.6 14.8H14" stroke="#1565c0" stroke-width="1.4" fill="none"/></svg>
<div class="t" style="left:767px;top:364px;letter-spacing:-0.269px;word-spacing:0.269px;">Clear</div>
<div class="t" style="right:917.02px;top:364px;letter-spacing:0.281px;word-spacing:-0.281px;">Ctrl+W</div>
<div class="t" style="left:767px;top:386px;letter-spacing:-0.066px;word-spacing:0.066px;">Show SQL completion proposal</div>
<div class="t" style="right:917.44px;top:386px;letter-spacing:-0.144px;word-spacing:0.144px;">Ctrl+Space</div>
<svg class="i" style="left:739px;top:408px" width="16" height="16" viewBox="0 0 16 16"><path d="M14.4 0.8L9.4 7.4" stroke="#3949ab" stroke-width="2.6" stroke-linecap="round"/><path d="M7.4 5.4L12.6 9.2L11 11.4L6 7.6Z" fill="#3f51b5"/><path d="M6 7.6L11 11.4C10.6 13.6 9 15.2 6.6 15.6C4 14.8 1.8 13 0.6 10.6C3 10.4 4.8 9.4 6 7.6Z" fill="#ffc107"/><path d="M3 11.4L6.4 14M5 9.6L8.6 12.6" stroke="#ffb300" stroke-width="0.7"/><circle cx="2.2" cy="3.4" r="0.8" fill="#bbdefb"/><circle cx="0.8" cy="1" r="0.5" fill="#cfe6fb"/><circle cx="3.6" cy="1.6" r="0.5" fill="#cfe6fb"/></svg>
<div class="t" style="left:767px;top:408px;letter-spacing:-0.349px;word-spacing:0.349px;">Reformat SQL</div>
<div class="t" style="right:917.36px;top:408px;letter-spacing:-0.062px;word-spacing:0.062px;">Ctrl+F8</div>
<svg class="i" style="left:739px;top:430px" width="16" height="16" viewBox="0 0 16 16"><path d="M1.4 0.6H14.6A1.2 1.2 0 0 1 15.8 1.8V10.8A1.2 1.2 0 0 1 14.6 12H4.4L0.2 15.8V1.8A1.2 1.2 0 0 1 1.4 0.6Z" fill="#673ab7"/><path d="M2.8 4h10.4M2.8 6.4h10.4M2.8 8.8h6.6" stroke="#b39ddb" stroke-width="1"/></svg>
<div class="t" style="left:767px;top:430px;letter-spacing:0.531px;word-spacing:-0.531px;">Un/comment</div>
<div class="a" style="left:765px;top:451px;width:274px;height:1px;background:#d7d7d7"></div>
<div class="a" style="left:765px;top:452px;width:274px;height:1px;background:#fff"></div>
<svg class="i" style="left:739px;top:458px" width="16" height="16" viewBox="0 0 16 16"><path d="M10.4 10.4L15.4 15.4" stroke="#424242" stroke-width="2"/><circle cx="6.3" cy="6.4" r="5.4" fill="#64b5f6" stroke="#455a64" stroke-width="1.4"/><path d="M4.2 4.6A2.8 2.8 0 0 1 8.4 4.6" stroke="#bbdefb" stroke-width="0.9" fill="none"/></svg>
<div class="t" style="left:767px;top:458px;letter-spacing:-0.186px;word-spacing:0.186px;">Find text ...</div>
<div class="t" style="right:917.22px;top:458px;letter-spacing:0.08px;word-spacing:-0.08px;">Ctrl+F</div>
<svg class="i" style="left:739px;top:480px" width="16" height="16" viewBox="0 0 16 16"><path d="M2.6 2.8A6.4 6.4 0 0 0 3 12.4" fill="none" stroke="#2f8fe0" stroke-width="1.8"/><path d="M11.4 1.6A6.4 6.4 0 0 1 12.6 12" fill="none" stroke="#2f8fe0" stroke-width="1.8"/><path d="M0.6 10.2L4.8 10.6L3.4 14.2Z" fill="#2f8fe0"/><path d="M9.6 0.4L13.6 1L10.8 4.4Z" fill="#2f8fe0"/><path d="M5 1h3.4M6.4 13.6h3" stroke="#2f8fe0" stroke-width="1.3" stroke-dasharray="1 0.9"/><path d="M12 12L15.6 15.6" stroke="#2f8fe0" stroke-width="1.8"/></svg>
<div class="t" style="left:767px;top:480px;letter-spacing:-0.349px;word-spacing:0.349px;">Replace text ...</div>
<div class="t" style="right:917.29px;top:480px;letter-spacing:0.013px;word-spacing:-0.013px;">Ctrl+R</div>
<div class="a" style="left:765px;top:501px;width:274px;height:1px;background:#d7d7d7"></div>
<div class="a" style="left:765px;top:502px;width:274px;height:1px;background:#fff"></div>
<svg class="i" style="left:739px;top:508px" width="16" height="16" viewBox="0 0 16 16"><path d="M0 2.9A1.2 1.2 0 0 1 1.2 1.7H5.6L7 3.4H0Z" fill="#ffa000"/><rect x="0" y="2.9" width="16" height="11.2" rx="1.2" fill="#ffca28"/></svg>
<div class="t" style="left:767px;top:508px;letter-spacing:-0.332px;word-spacing:0.332px;">Load SQL file...</div>
<div class="t" style="right:917.02px;top:508px;letter-spacing:0.279px;word-spacing:-0.279px;">Ctrl+O</div>
<svg class="i" style="left:739px;top:530px" width="16" height="16" viewBox="0 0 16 16"><path d="M12.6 0.2L15.8 2.6V13.4L13.2 15.8V2.6Z" fill="#1976d2"/><path d="M0 2.6H13.2V15.8H0Z" fill="#42a5f5"/><path d="M3 0H12.6L13.2 2.6V5.2H3.6Z" fill="#1565c0"/><rect x="4.6" y="2" width="5" height="3.6" fill="#90caf9"/><rect x="7.4" y="2.4" width="1.6" height="2.8" fill="#263238"/><rect x="1.3" y="9" width="10.8" height="6" fill="#e3f2fd"/><path d="M2.6 11h8M2.6 13.2h8" stroke="#bbdefb" stroke-width="0.9"/></svg>
<div class="t" style="left:767px;top:530px;letter-spacing:-0.751px;word-spacing:0.751px;">Save</div>
<div class="t" style="right:917.36px;top:530px;letter-spacing:-0.055px;word-spacing:0.055px;">Ctrl+S</div>
<svg class="i" style="left:739px;top:552px" width="16" height="16" viewBox="0 0 16 16"><path d="M12.6 0.2L15.8 2.6V13.4L13.2 15.8V2.6Z" fill="#1976d2"/><path d="M0 2.6H13.2V15.8H0Z" fill="#42a5f5"/><path d="M3 0H12.6L13.2 2.6V5.2H3.6Z" fill="#1565c0"/><rect x="4.6" y="2" width="5" height="3.6" fill="#90caf9"/><rect x="7.4" y="2.4" width="1.6" height="2.8" fill="#263238"/><rect x="1.3" y="9" width="10.8" height="6" fill="#e3f2fd"/><path d="M2.6 11h8M2.6 13.2h8" stroke="#bbdefb" stroke-width="0.9"/></svg>
<div class="t" style="left:767px;top:552px;letter-spacing:-0.774px;word-spacing:0.774px;">Save as ...</div>
<div class="t" style="right:918.2px;top:552px;letter-spacing:-0.9px;word-spacing:0.9px;">F12</div>
<svg class="i" style="left:739px;top:574px" width="16" height="16" viewBox="0 0 16 16"><path d="M12.6 0.2L15.8 2.6V13.4L13.2 15.8V2.6Z" fill="#bdbdbd"/><path d="M0 2.6H13.2V15.8H0Z" fill="#d0d0d0"/><path d="M3 0H12.6L13.2 2.6V5.2H3.6Z" fill="#b8b8b8"/><rect x="4.6" y="2" width="5" height="3.6" fill="#dedede"/><rect x="7.4" y="2.4" width="1.6" height="2.8" fill="#a8a8a8"/><rect x="1.3" y="9" width="10.8" height="6" fill="#efefef"/><path d="M2.6 11h8M2.6 13.2h8" stroke="#dcdcdc" stroke-width="0.9"/></svg>
<div class="t d" style="left:767px;top:574px;letter-spacing:-0.19px;word-spacing:0.19px;">Save selection to file ...</div>
<div class="t d" style="right:917.22px;top:574px;letter-spacing:0.082px;word-spacing:-0.082px;">Shift+Ctrl+S</div>
<svg class="i" style="left:739px;top:596px" width="16" height="16" viewBox="0 0 16 16"><rect x="2" y="0.5" width="12.6" height="11.6" fill="#90caf9"/><path d="M0.2 12H12C12 13.8 11 14.6 9.6 14.6H2.6C1.2 14.6 0.2 13.6 0.2 12Z" fill="#42a5f5"/><rect x="9.6" y="9" width="6.3" height="6.8" fill="#1e88e5"/><rect x="10.6" y="12" width="4.4" height="3" fill="#e3f2fd"/><rect x="11.6" y="9.4" width="2.4" height="1.6" fill="#e3f2fd"/></svg>
<div class="t" style="left:767px;top:596px;letter-spacing:-0.422px;word-spacing:0.422px;">Save as snippet ...</div>
<svg class="i" style="left:739px;top:618px" width="16" height="16" viewBox="0 0 16 16"><rect x="2" y="0.5" width="12.6" height="11.6" fill="#d8d8d8"/><path d="M0.2 12H12C12 13.8 11 14.6 9.6 14.6H2.6C1.2 14.6 0.2 13.6 0.2 12Z" fill="#cccccc"/><rect x="9.6" y="9" width="6.3" height="6.8" fill="#c4c4c4"/><rect x="10.6" y="12" width="4.4" height="3" fill="#f2f2f2"/><rect x="11.6" y="9.4" width="2.4" height="1.6" fill="#f2f2f2"/></svg>
<div class="t d" style="left:767px;top:618px;letter-spacing:-0.284px;word-spacing:0.284px;">Save selection as snippet ...</div>
<div class="a" style="left:765px;top:639px;width:274px;height:1px;background:#d7d7d7"></div>
<div class="a" style="left:765px;top:640px;width:274px;height:1px;background:#fff"></div>
<svg class="i" style="left:739px;top:646px" width="16" height="16" viewBox="0 0 16 16"><circle cx="8" cy="8" r="8" fill="#2196f3"/><text x="8" y="12.6" font-size="12.5" font-weight="bold" text-anchor="middle" font-family="Liberation Sans,sans-serif" fill="#e8f4fe">?</text></svg>
<div class="t" style="left:767px;top:646px;letter-spacing:-0.406px;word-spacing:0.406px;">SQL help</div>
<div class="t" style="right:919.5px;top:646px;letter-spacing:-0.9px;word-spacing:0.9px;">F1</div>
<svg class="i" style="left:739px;top:668px" width="16" height="16" viewBox="0 0 16 16"><path d="M6.4 0.6H11L8.6 6H12L5.6 15.4L7.2 8.6H4Z" fill="#d500f9"/></svg>
<div class="t" style="left:767px;top:668px;letter-spacing:0.163px;word-spacing:-0.163px;">Insert function</div>
<svg class="i" style="left:1027px;top:672px" width="5" height="8" viewBox="0 0 5 8"><path d="M0.5 0.3L4.6 4L0.5 7.7Z" fill="#111"/></svg>
</body></html>
